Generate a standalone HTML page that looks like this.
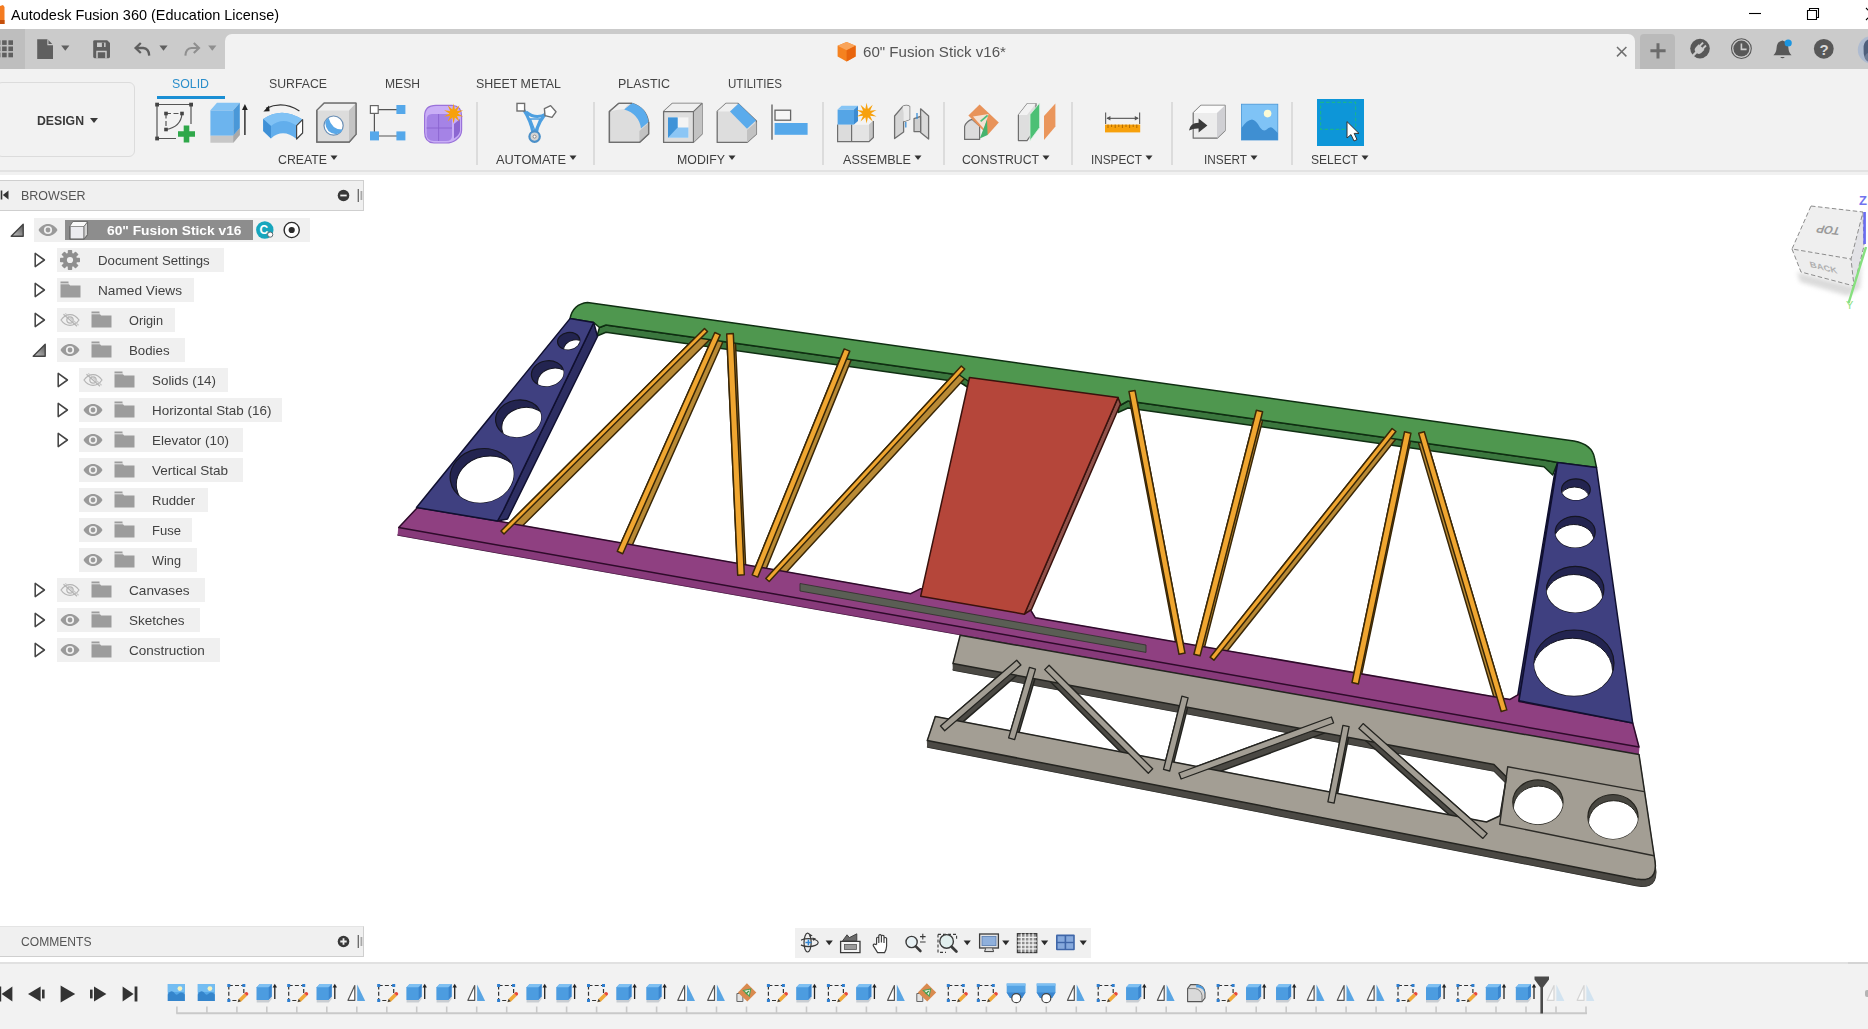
<!DOCTYPE html>
<html lang="en"><head><meta charset="utf-8"><title>Autodesk Fusion 360 (Education License)</title>
<style>
html,body{margin:0;padding:0;}
body{width:1868px;height:1029px;overflow:hidden;background:#fff;position:relative;
font-family:"Liberation Sans",sans-serif;}
.b{position:absolute;display:block;}
.t{position:absolute;white-space:nowrap;line-height:1;transform-origin:0 50%;}
</style></head>
<body>
<div class="b" style="left:0px;top:0px;width:1868px;height:29px;background:#ffffff;"></div>
<svg class="b" style="left:0;top:5px" width="6" height="20" viewBox="0 0 6 20"><path d="M0 1 L3 0 L4.5 2 L4.5 19 L0 19Z" fill="#f47b20"/><path d="M0 15 L4.5 15 L4.5 19 L0 19Z" fill="#c4500c"/></svg>
<span class="t" style="left:11.0px;top:6.8px;font-size:15px;color:#000;transform:scaleX(0.9652);">Autodesk Fusion 360 (Education License)</span>
<svg class="b" style="left:1740px;top:0" width="128" height="29" viewBox="1740 0 128 29" fill="none" stroke="#000" stroke-width="1.1"><path d="M1749 13.5H1761"/><path d="M1807.5 10.5H1816.5V19.5H1807.5Z"/><path d="M1809.5 10.5V8.5H1818.5V17.5H1816.5"/><path d="M1866 8L1878 20M1878 8L1866 20"/></svg>
<div class="b" style="left:0px;top:29px;width:1868px;height:40px;background:#cbcbcb;"></div>
<div class="b" style="left:0px;top:29px;width:25px;height:40px;background:#bebebe;"></div>
<div class="b" style="left:225px;top:34px;width:1410px;height:36px;background:#f2f2f2;border-radius:7px 7px 0 0;"></div>
<div class="b" style="left:1640px;top:34px;width:35px;height:35px;background:#bababa;border-radius:4px 4px 0 0;"></div>
<div class="b" style="left:0px;top:69px;width:1868px;height:101px;background:#f2f2f2;"></div>
<div class="b" style="left:0px;top:170px;width:1868px;height:2px;background:#e2e2e2;"></div>
<div class="b" style="left:0px;top:172px;width:1868px;height:3px;background:#f1f1f1;"></div>
<div class="b" style="left:-4px;top:82px;width:139px;height:75px;background:#f2f2f2;border:1px solid #dcdcdc;border-radius:6px;box-sizing:border-box;"></div>
<span class="t" style="left:37.0px;top:114.0px;font-size:13px;color:#3a3a3a;font-weight:700;transform:scaleX(0.9429);">DESIGN</span>
<svg class="b" style="left:89px;top:117px" width="10" height="7"><path d="M1 1H9L5 6Z" fill="#3a3a3a"/></svg>
<span class="t" style="left:172.0px;top:77.0px;font-size:13px;color:#2a8ecb;transform:scaleX(0.9484);">SOLID</span>
<div class="b" style="left:157px;top:95.5px;width:67.5px;height:3.5px;background:#1a8fd4;"></div>
<span class="t" style="left:269.0px;top:77.0px;font-size:13px;color:#444;transform:scaleX(0.9445);">SURFACE</span>
<span class="t" style="left:385.0px;top:77.0px;font-size:13px;color:#444;transform:scaleX(0.9318);">MESH</span>
<span class="t" style="left:476.0px;top:77.0px;font-size:13px;color:#444;transform:scaleX(0.9539);">SHEET METAL</span>
<span class="t" style="left:618.0px;top:77.0px;font-size:13px;color:#444;transform:scaleX(0.9596);">PLASTIC</span>
<span class="t" style="left:728.0px;top:77.0px;font-size:13px;color:#444;transform:scaleX(0.8899);">UTILITIES</span>
<span class="t" style="left:278.0px;top:153.0px;font-size:13px;color:#3f3f3f;transform:scaleX(0.9465);">CREATE</span>
<svg class="b" style="left:330px;top:155px" width="8" height="6"><path d="M0.5 0.5H7.5L4 5Z" fill="#333"/></svg>
<span class="t" style="left:496.0px;top:153.0px;font-size:13px;color:#3f3f3f;transform:scaleX(0.9855);">AUTOMATE</span>
<svg class="b" style="left:569px;top:155px" width="8" height="6"><path d="M0.5 0.5H7.5L4 5Z" fill="#333"/></svg>
<span class="t" style="left:677.0px;top:153.0px;font-size:13px;color:#3f3f3f;transform:scaleX(0.9495);">MODIFY</span>
<svg class="b" style="left:728px;top:155px" width="8" height="6"><path d="M0.5 0.5H7.5L4 5Z" fill="#333"/></svg>
<span class="t" style="left:843.0px;top:153.0px;font-size:13px;color:#3f3f3f;transform:scaleX(0.9702);">ASSEMBLE</span>
<svg class="b" style="left:914px;top:155px" width="8" height="6"><path d="M0.5 0.5H7.5L4 5Z" fill="#333"/></svg>
<span class="t" style="left:962.0px;top:153.0px;font-size:13px;color:#3f3f3f;transform:scaleX(0.9435);">CONSTRUCT</span>
<svg class="b" style="left:1042px;top:155px" width="8" height="6"><path d="M0.5 0.5H7.5L4 5Z" fill="#333"/></svg>
<span class="t" style="left:1091.0px;top:153.0px;font-size:13px;color:#3f3f3f;transform:scaleX(0.9051);">INSPECT</span>
<svg class="b" style="left:1145px;top:155px" width="8" height="6"><path d="M0.5 0.5H7.5L4 5Z" fill="#333"/></svg>
<span class="t" style="left:1204.0px;top:153.0px;font-size:13px;color:#3f3f3f;transform:scaleX(0.9064);">INSERT</span>
<svg class="b" style="left:1250px;top:155px" width="8" height="6"><path d="M0.5 0.5H7.5L4 5Z" fill="#333"/></svg>
<span class="t" style="left:1311.0px;top:153.0px;font-size:13px;color:#3f3f3f;transform:scaleX(0.9293);">SELECT</span>
<svg class="b" style="left:1361px;top:155px" width="8" height="6"><path d="M0.5 0.5H7.5L4 5Z" fill="#333"/></svg>
<div class="b" style="left:475.6px;top:102px;width:2px;height:63px;background:#dcdcdc;"></div>
<div class="b" style="left:592.7px;top:102px;width:2px;height:63px;background:#dcdcdc;"></div>
<div class="b" style="left:821.9px;top:102px;width:2px;height:63px;background:#dcdcdc;"></div>
<div class="b" style="left:942.8px;top:102px;width:2px;height:63px;background:#dcdcdc;"></div>
<div class="b" style="left:1071.2px;top:102px;width:2px;height:63px;background:#dcdcdc;"></div>
<div class="b" style="left:1170.6px;top:102px;width:2px;height:63px;background:#dcdcdc;"></div>
<div class="b" style="left:1291.4px;top:102px;width:2px;height:63px;background:#dcdcdc;"></div>
<div class="b" style="left:0px;top:180px;width:364px;height:31px;background:#f0f0f0;border:1px solid #cfcfcf;border-left:none;box-sizing:border-box;"></div>
<span class="t" style="left:20.5px;top:189.0px;font-size:13px;color:#555;transform:scaleX(0.9602);">BROWSER</span>
<svg class="b" style="left:0;top:188px" width="12" height="14"><path d="M1.5 2.5V11.5" stroke="#333" stroke-width="1.6"/><path d="M8.5 2.5V11.5L2.8 7Z" fill="#333"/></svg>
<svg class="b" style="left:336px;top:188px" width="28" height="16"><circle cx="7.5" cy="7.5" r="5.8" fill="#383838"/><path d="M4.3 7.5H10.7" stroke="#f0f0f0" stroke-width="1.8"/><path d="M22.3 1V14" stroke="#666" stroke-width="1.3"/><path d="M25.4 3V12" stroke="#a8a8a8" stroke-width="1.8"/></svg>
<div class="b" style="left:0px;top:926px;width:364px;height:31px;background:#f0f0f0;border:1px solid #cfcfcf;border-left:none;border-top-color:#e4e4e4;box-sizing:border-box;"></div>
<span class="t" style="left:20.5px;top:934.7px;font-size:13px;color:#555;transform:scaleX(0.9297);">COMMENTS</span>
<svg class="b" style="left:336px;top:934px" width="28" height="16"><circle cx="7.5" cy="7.5" r="5.8" fill="#383838"/><path d="M4.3 7.5H10.7M7.5 4.3V10.7" stroke="#f0f0f0" stroke-width="1.8"/><path d="M22.3 1V14" stroke="#666" stroke-width="1.3"/><path d="M25.4 3V12" stroke="#a8a8a8" stroke-width="1.8"/></svg>
<div class="b" style="left:795px;top:928px;width:296px;height:30px;background:#f0f0f0;"></div>
<div class="b" style="left:0px;top:962px;width:1868px;height:67px;background:#f2f2f2;border-top:2px solid #e1e1e1;box-sizing:border-box;"></div>
<div class="b" style="left:1848px;top:962px;width:20px;height:2px;background:#d4d4d4;"></div>
<div class="b" style="left:1865px;top:990px;width:3px;height:7px;background:#b4b4b4;border-radius:2px 0 0 2px;"></div>
<svg class="b" style="left:380px;top:290px" width="1300" height="610" viewBox="380 290 1300 610">
<polygon points="416.9,515.1 496.9,528.6 524.4,533.6 910.1,601.3 920.1,596.3 1029.4,616.6 1034.8,625.4 1509.4,707.0 1519.0,701.4 1518.4,709.1 1632.1,730.6 1638.4,754.6 398.1,535.1" fill="#873a7a" stroke="#2e0b2a" stroke-width="1.5" stroke-linejoin="round"/>
<g fill="#873a7a" stroke="#873a7a" stroke-width="0.5">
<polygon points="417.5,507.5 497.5,521.0 496.9,528.6 416.9,515.1"/>
<polygon points="497.5,521.0 525.0,526.0 524.4,533.6 496.9,528.6"/>
<polygon points="525.0,526.0 910.7,593.7 910.1,601.3 524.4,533.6"/>
<polygon points="910.7,593.7 920.7,588.7 920.1,596.3 910.1,601.3"/>
<polygon points="920.7,588.7 1030.0,609.0 1029.4,616.6 920.1,596.3"/>
<polygon points="1030.0,609.0 1035.4,617.8 1034.8,625.4 1029.4,616.6"/>
<polygon points="1035.4,617.8 1510.0,699.4 1509.4,707.0 1034.8,625.4"/>
<polygon points="1510.0,699.4 1519.6,693.8 1519.0,701.4 1509.4,707.0"/>
<polygon points="1519.6,693.8 1519.0,701.5 1518.4,709.1 1519.0,701.4"/>
<polygon points="1519.0,701.5 1632.7,723.0 1632.1,730.6 1518.4,709.1"/>
<polygon points="1632.7,723.0 1639.0,747.0 1638.4,754.6 1632.1,730.6"/>
<polygon points="1639.0,747.0 398.7,527.5 398.1,535.1 1638.4,754.6"/>
<polygon points="398.7,527.5 417.5,507.5 416.9,515.1 398.1,535.1"/>
</g>
<polygon points="599.5,327.5 606.0,325.0 959.5,375.0 969.0,381.0 969.0,388.0 959.5,382.0 606.0,332.2 597.0,336.0" fill="#3b773e" stroke="#0f2e12" stroke-width="1.5" stroke-linejoin="round"/>
<polygon points="1119.0,406.0 1128.0,401.0 1544.0,460.0 1557.7,462.5 1552.7,475.0 1544.0,466.8 1128.0,408.0 1118.0,412.5" fill="#3b773e" stroke="#0f2e12" stroke-width="1.5" stroke-linejoin="round"/>
<polygon points="593.7,322.5 597.5,336.5 507.5,519.0 497.5,521.0 503.5,510.0" fill="#2d2e62" stroke="#101030" stroke-width="1.5" stroke-linejoin="round"/>
<polygon points="1557.7,462.5 1554.2,476.0 1517.6,696.0 1519.0,701.5" fill="#2d2e62" stroke="#101030" stroke-width="1.5" stroke-linejoin="round"/>
<polygon points="501.0,531.0 704.5,328.5 707.5,331.5 710.0,339.3 506.5,541.8 503.5,538.8" fill="#b98a35" stroke="#3a2706" stroke-width="1.5" stroke-linejoin="round"/>
<polygon points="617.3,551.3 714.8,332.5 720.2,334.9 722.5,342.7 625.0,561.5 619.6,559.1" fill="#b98a35" stroke="#3a2706" stroke-width="1.5" stroke-linejoin="round"/>
<polygon points="726.7,333.9 733.3,333.5 735.4,341.3 746.4,582.6 739.7,583.0 737.7,575.2" fill="#b98a35" stroke="#3a2706" stroke-width="1.5" stroke-linejoin="round"/>
<polygon points="752.2,574.9 844.2,348.9 849.8,351.1 851.6,358.9 759.6,584.9 754.0,582.7" fill="#b98a35" stroke="#3a2706" stroke-width="1.5" stroke-linejoin="round"/>
<polygon points="765.8,578.5 961.3,366.0 964.7,369.0 966.2,376.8 770.7,589.3 767.4,586.3" fill="#b98a35" stroke="#3a2706" stroke-width="1.5" stroke-linejoin="round"/>
<polygon points="1129.0,391.6 1135.0,390.4 1185.0,653.1 1185.4,660.9 1179.4,662.1 1129.4,399.4" fill="#b98a35" stroke="#3a2706" stroke-width="1.5" stroke-linejoin="round"/>
<polygon points="1193.9,654.2 1256.4,410.2 1262.6,411.8 1262.8,419.6 1200.3,663.6 1194.0,662.0" fill="#b98a35" stroke="#3a2706" stroke-width="1.5" stroke-linejoin="round"/>
<polygon points="1210.0,665.0 1210.1,657.2 1392.1,428.5 1395.9,431.5 1395.7,439.3 1213.7,668.0" fill="#b98a35" stroke="#3a2706" stroke-width="1.5" stroke-linejoin="round"/>
<polygon points="1351.5,690.3 1352.0,682.5 1404.5,431.8 1410.9,433.2 1410.5,441.0 1358.0,691.7" fill="#b98a35" stroke="#3a2706" stroke-width="1.5" stroke-linejoin="round"/>
<polygon points="1418.0,441.1 1418.7,433.3 1424.3,431.7 1506.8,709.9 1506.0,717.7 1500.5,719.3" fill="#b98a35" stroke="#3a2706" stroke-width="1.5" stroke-linejoin="round"/>
<polygon points="417.5,507.5 497.5,521.0 525.0,526.0 910.7,593.7 920.7,588.7 1030.0,609.0 1035.4,617.8 1510.0,699.4 1519.6,693.8 1519.0,701.5 1632.7,723.0 1639.0,747.0 398.7,527.5" fill="#8f4081" stroke="#2e0b2a" stroke-width="1.5" stroke-linejoin="round"/>
<polygon points="800.0,583.5 1146.0,645.0 1146.0,652.4 800.0,591.0" fill="#5a5e54" stroke="#2c2e28" stroke-width="0.8" stroke-linejoin="round"/>
<path d="M570 318.6 Q573 304 587.5 302.5 L1574 441 Q1592 444.5 1594.4 457.5 L1596.5 467.5 L1557.7 462.5 L1544 460 L1128 401 L1119 406 L968 381 L959.5 375 L606 325 L599.5 327.5 L593.7 322.5 Z" fill="#4f974f" stroke="#0f2e12" stroke-width="1.5" stroke-linejoin="round"/>
<polygon points="570.0,318.6 593.7,322.5 503.5,510.0 497.5,521.0 416.5,507.5" fill="#3f4080" stroke="#101030" stroke-width="1.5" stroke-linejoin="round"/>
<clipPath id="hc1"><ellipse cx="568.7" cy="341" rx="11.2" ry="8.5" transform="rotate(-10 568.7 341)"/></clipPath>
<ellipse cx="568.7" cy="341" rx="11.2" ry="8.5" transform="rotate(-10 568.7 341)" fill="#232450" stroke="#151522" stroke-width="1.2"/>
<g clip-path="url(#hc1)"><ellipse cx="573.5" cy="349.4" rx="11.2" ry="8.5" transform="rotate(-10 568.7 341)" fill="#fff" stroke="#151522" stroke-width="1"/></g>
<clipPath id="hc2"><ellipse cx="547.5" cy="373.5" rx="16.2" ry="12.7" transform="rotate(-10 547.5 373.5)"/></clipPath>
<ellipse cx="547.5" cy="373.5" rx="16.2" ry="12.7" transform="rotate(-10 547.5 373.5)" fill="#232450" stroke="#151522" stroke-width="1.2"/>
<g clip-path="url(#hc2)"><ellipse cx="552.3" cy="381.9" rx="16.2" ry="12.7" transform="rotate(-10 547.5 373.5)" fill="#fff" stroke="#151522" stroke-width="1"/></g>
<clipPath id="hc3"><ellipse cx="518.4" cy="418.5" rx="22.9" ry="18.5" transform="rotate(-10 518.4 418.5)"/></clipPath>
<ellipse cx="518.4" cy="418.5" rx="22.9" ry="18.5" transform="rotate(-10 518.4 418.5)" fill="#232450" stroke="#151522" stroke-width="1.2"/>
<g clip-path="url(#hc3)"><ellipse cx="523.1999999999999" cy="426.9" rx="22.9" ry="18.5" transform="rotate(-10 518.4 418.5)" fill="#fff" stroke="#151522" stroke-width="1"/></g>
<clipPath id="hc4"><ellipse cx="481.9" cy="475.6" rx="31.9" ry="26.9" transform="rotate(-10 481.9 475.6)"/></clipPath>
<ellipse cx="481.9" cy="475.6" rx="31.9" ry="26.9" transform="rotate(-10 481.9 475.6)" fill="#232450" stroke="#151522" stroke-width="1.2"/>
<g clip-path="url(#hc4)"><ellipse cx="486.7" cy="484.0" rx="31.9" ry="26.9" transform="rotate(-10 481.9 475.6)" fill="#fff" stroke="#151522" stroke-width="1"/></g>
<polygon points="1557.7,462.5 1596.5,467.5 1632.7,723.0 1519.0,700.7" fill="#3f4080" stroke="#101030" stroke-width="1.5" stroke-linejoin="round"/>
<clipPath id="hc5"><ellipse cx="1575.9" cy="489.4" rx="14.4" ry="10.6"/></clipPath>
<ellipse cx="1575.9" cy="489.4" rx="14.4" ry="10.6" fill="#232450" stroke="#151522" stroke-width="1.2"/>
<g clip-path="url(#hc5)"><ellipse cx="1574.5" cy="497.59999999999997" rx="14.4" ry="10.6" fill="#fff" stroke="#151522" stroke-width="1"/></g>
<clipPath id="hc6"><ellipse cx="1575.2" cy="531.9" rx="20" ry="15.6"/></clipPath>
<ellipse cx="1575.2" cy="531.9" rx="20" ry="15.6" fill="#232450" stroke="#151522" stroke-width="1.2"/>
<g clip-path="url(#hc6)"><ellipse cx="1573.8" cy="540.1" rx="20" ry="15.6" fill="#fff" stroke="#151522" stroke-width="1"/></g>
<clipPath id="hc7"><ellipse cx="1575.2" cy="589.4" rx="28.7" ry="23.1"/></clipPath>
<ellipse cx="1575.2" cy="589.4" rx="28.7" ry="23.1" fill="#232450" stroke="#151522" stroke-width="1.2"/>
<g clip-path="url(#hc7)"><ellipse cx="1573.8" cy="597.6" rx="28.7" ry="23.1" fill="#fff" stroke="#151522" stroke-width="1"/></g>
<clipPath id="hc8"><ellipse cx="1574" cy="662.9" rx="40" ry="32.9"/></clipPath>
<ellipse cx="1574" cy="662.9" rx="40" ry="32.9" fill="#232450" stroke="#151522" stroke-width="1.2"/>
<g clip-path="url(#hc8)"><ellipse cx="1572.6" cy="671.1" rx="40" ry="32.9" fill="#fff" stroke="#151522" stroke-width="1"/></g>
<polygon points="1118.0,397.5 1120.5,404.0 1031.5,609.5 1024.4,614.2" fill="#91524b" stroke="#3a120d" stroke-width="1.5" stroke-linejoin="round"/>
<polygon points="969.5,377.5 1118.0,397.5 1024.4,614.2 920.7,596.2" fill="#b5463a" stroke="#3a120d" stroke-width="1.5" stroke-linejoin="round"/>
<polygon points="704.5,328.5 707.5,331.5 504.0,534.0 501.0,531.0" fill="#f0a630" stroke="#3a2706" stroke-width="1.5" stroke-linejoin="round"/>
<polygon points="714.8,332.5 720.2,334.9 622.7,553.7 617.3,551.3" fill="#f0a630" stroke="#3a2706" stroke-width="1.5" stroke-linejoin="round"/>
<polygon points="726.7,333.9 733.3,333.5 744.3,574.8 737.7,575.2" fill="#f0a630" stroke="#3a2706" stroke-width="1.5" stroke-linejoin="round"/>
<polygon points="844.2,348.9 849.8,351.1 757.8,577.1 752.2,574.9" fill="#f0a630" stroke="#3a2706" stroke-width="1.5" stroke-linejoin="round"/>
<polygon points="961.3,366.0 964.7,369.0 769.2,581.5 765.8,578.5" fill="#f0a630" stroke="#3a2706" stroke-width="1.5" stroke-linejoin="round"/>
<polygon points="1129.0,391.6 1135.0,390.4 1185.0,653.1 1179.0,654.3" fill="#f0a630" stroke="#3a2706" stroke-width="1.5" stroke-linejoin="round"/>
<polygon points="1256.4,410.2 1262.6,411.8 1200.1,655.8 1193.9,654.2" fill="#f0a630" stroke="#3a2706" stroke-width="1.5" stroke-linejoin="round"/>
<polygon points="1392.1,428.5 1395.9,431.5 1213.9,660.2 1210.1,657.2" fill="#f0a630" stroke="#3a2706" stroke-width="1.5" stroke-linejoin="round"/>
<polygon points="1404.5,431.8 1410.9,433.2 1358.4,683.9 1352.0,682.5" fill="#f0a630" stroke="#3a2706" stroke-width="1.5" stroke-linejoin="round"/>
<polygon points="1418.7,433.3 1424.3,431.7 1506.8,709.9 1501.2,711.5" fill="#f0a630" stroke="#3a2706" stroke-width="1.5" stroke-linejoin="round"/>
<polygon points="960.5,641.9 1639.3,761.1 1655.2,867.1 1655.7,872.4 1655.3,876.8 1654.2,880.4 1652.2,883.1 1649.4,885.0 1645.8,886.0 1641.3,886.2 1636.1,885.5 927.6,747.0 935.6,723.0 1486.8,828.6 1500.3,822.3 1506.8,783.6 1494.3,771.1 953.3,670.0" fill="#4b4944" stroke="#242420" stroke-width="1.5" stroke-linejoin="round"/>
<g fill="#4b4944" stroke="#4b4944" stroke-width="0.5">
<polygon points="960.2,635.3 1639.0,754.5 1639.3,761.1 960.5,641.9"/>
<polygon points="1639.0,754.5 1654.9,860.5 1655.2,867.1 1639.3,761.1"/>
<polygon points="1654.9,860.5 1655.4,865.8 1655.7,872.4 1655.2,867.1"/>
<polygon points="1655.4,865.8 1655.0,870.2 1655.3,876.8 1655.7,872.4"/>
<polygon points="1655.0,870.2 1653.9,873.8 1654.2,880.4 1655.3,876.8"/>
<polygon points="1653.9,873.8 1651.9,876.5 1652.2,883.1 1654.2,880.4"/>
<polygon points="1651.9,876.5 1649.1,878.4 1649.4,885.0 1652.2,883.1"/>
<polygon points="1649.1,878.4 1645.5,879.4 1645.8,886.0 1649.4,885.0"/>
<polygon points="1645.5,879.4 1641.0,879.6 1641.3,886.2 1645.8,886.0"/>
<polygon points="1641.0,879.6 1635.8,878.9 1636.1,885.5 1641.3,886.2"/>
<polygon points="1635.8,878.9 927.3,740.4 927.6,747.0 1636.1,885.5"/>
<polygon points="927.3,740.4 935.3,716.4 935.6,723.0 927.6,747.0"/>
<polygon points="935.3,716.4 1486.5,822.0 1486.8,828.6 935.6,723.0"/>
<polygon points="1486.5,822.0 1500.0,815.7 1500.3,822.3 1486.8,828.6"/>
<polygon points="1500.0,815.7 1506.5,777.0 1506.8,783.6 1500.3,822.3"/>
<polygon points="1506.5,777.0 1494.0,764.5 1494.3,771.1 1506.8,783.6"/>
<polygon points="1494.0,764.5 953.0,663.4 953.3,670.0 1494.3,771.1"/>
<polygon points="953.0,663.4 960.2,635.3 960.5,641.9 953.3,670.0"/>
</g>
<polygon points="940.5,726.0 1016.7,660.2 1020.9,665.0 1021.2,671.6 945.0,737.4 940.8,732.6" fill="#4b4944" stroke="#242420" stroke-width="1.5" stroke-linejoin="round"/>
<polygon points="1008.6,737.9 1029.5,667.3 1035.5,669.1 1035.8,675.7 1014.9,746.3 1008.9,744.5" fill="#4b4944" stroke="#242420" stroke-width="1.5" stroke-linejoin="round"/>
<polygon points="1044.7,669.6 1049.1,665.2 1152.7,768.8 1153.0,775.4 1148.6,779.8 1045.0,676.2" fill="#4b4944" stroke="#242420" stroke-width="1.5" stroke-linejoin="round"/>
<polygon points="1163.5,769.4 1181.9,696.2 1188.1,697.8 1188.4,704.4 1170.0,777.6 1163.8,776.0" fill="#4b4944" stroke="#242420" stroke-width="1.5" stroke-linejoin="round"/>
<polygon points="1178.9,773.0 1331.4,717.0 1333.6,723.0 1333.9,729.6 1181.4,785.6 1179.2,779.6" fill="#4b4944" stroke="#242420" stroke-width="1.5" stroke-linejoin="round"/>
<polygon points="1327.9,801.9 1342.9,725.4 1349.1,726.6 1349.4,733.2 1334.4,809.7 1328.2,808.5" fill="#4b4944" stroke="#242420" stroke-width="1.5" stroke-linejoin="round"/>
<polygon points="1358.9,728.4 1363.1,723.6 1487.1,833.6 1487.4,840.2 1483.2,845.0 1359.2,735.0" fill="#4b4944" stroke="#242420" stroke-width="1.5" stroke-linejoin="round"/>
<polygon points="960.2,635.3 1639.0,754.5 1654.9,860.5 1655.4,865.8 1655.0,870.2 1653.9,873.8 1651.9,876.5 1649.1,878.4 1645.5,879.4 1641.0,879.6 1635.8,878.9 927.3,740.4 935.3,716.4 1486.5,822.0 1500.0,815.7 1506.5,777.0 1494.0,764.5 953.0,663.4" fill="#a39e94" stroke="#242420" stroke-width="1.5" stroke-linejoin="round"/>
<polygon points="1016.7,660.2 940.5,726.0 944.7,730.8 1020.9,665.0" fill="#a39e94" stroke="#242420" stroke-width="1.3" stroke-linejoin="round"/>
<polygon points="1029.5,667.3 1008.6,737.9 1014.6,739.7 1035.5,669.1" fill="#a39e94" stroke="#242420" stroke-width="1.3" stroke-linejoin="round"/>
<polygon points="1044.7,669.6 1148.3,773.2 1152.7,768.8 1049.1,665.2" fill="#a39e94" stroke="#242420" stroke-width="1.3" stroke-linejoin="round"/>
<polygon points="1181.9,696.2 1163.5,769.4 1169.7,771.0 1188.1,697.8" fill="#a39e94" stroke="#242420" stroke-width="1.3" stroke-linejoin="round"/>
<polygon points="1331.4,717.0 1178.9,773.0 1181.1,779.0 1333.6,723.0" fill="#a39e94" stroke="#242420" stroke-width="1.3" stroke-linejoin="round"/>
<polygon points="1342.9,725.4 1327.9,801.9 1334.1,803.1 1349.1,726.6" fill="#a39e94" stroke="#242420" stroke-width="1.3" stroke-linejoin="round"/>
<polygon points="1358.9,728.4 1482.9,838.4 1487.1,833.6 1363.1,723.6" fill="#a39e94" stroke="#242420" stroke-width="1.3" stroke-linejoin="round"/>
<polyline points="1644.2,791.6 1507.7,766.8 1499.7,824.3 1654,855.7" fill="none" stroke="#2c2b27" stroke-width="1.4" stroke-linejoin="round"/>
<clipPath id="hc9"><ellipse cx="1537.9" cy="802.1" rx="25.1" ry="22.2"/></clipPath>
<ellipse cx="1537.9" cy="802.1" rx="25.1" ry="22.2" fill="#484741" stroke="#26251f" stroke-width="1.2"/>
<g clip-path="url(#hc9)"><ellipse cx="1538.5" cy="808.3000000000001" rx="25.1" ry="22.2" fill="#fff" stroke="#26251f" stroke-width="1"/></g>
<clipPath id="hc10"><ellipse cx="1613" cy="816.7" rx="25.1" ry="22.2"/></clipPath>
<ellipse cx="1613" cy="816.7" rx="25.1" ry="22.2" fill="#484741" stroke="#26251f" stroke-width="1.2"/>
<g clip-path="url(#hc10)"><ellipse cx="1613.6" cy="822.9000000000001" rx="25.1" ry="22.2" fill="#fff" stroke="#26251f" stroke-width="1"/></g>
</svg>
<svg class="b" style="left:0;top:29px" width="226" height="40" viewBox="0 29 226 40">
<rect x="-4.2" y="40.3" width="4.6" height="4.6" fill="#5f5f5f"/>
<rect x="2.1" y="40.3" width="4.6" height="4.6" fill="#5f5f5f"/>
<rect x="8.4" y="40.3" width="4.6" height="4.6" fill="#5f5f5f"/>
<rect x="-4.2" y="46.5" width="4.6" height="4.6" fill="#5f5f5f"/>
<rect x="2.1" y="46.5" width="4.6" height="4.6" fill="#5f5f5f"/>
<rect x="8.4" y="46.5" width="4.6" height="4.6" fill="#5f5f5f"/>
<rect x="-4.2" y="52.7" width="4.6" height="4.6" fill="#5f5f5f"/>
<rect x="2.1" y="52.7" width="4.6" height="4.6" fill="#5f5f5f"/>
<rect x="8.4" y="52.7" width="4.6" height="4.6" fill="#5f5f5f"/>
<path d="M37.2 39.2H47.6L53 44.8V59H37.2Z" fill="#5f5f5f"/><path d="M47.9 39.2V44.6H53.2" fill="none" stroke="#cbcbcb" stroke-width="1.1"/>
<path d="M61.2 45.4H69.4L65.3 50.8Z" fill="#5f5f5f"/>
<path d="M93.2 41.6Q93.2 40.2 94.6 40.2H107.2L110 43V56.8Q110 58.2 108.6 58.2H94.6Q93.2 58.2 93.2 56.8Z" fill="#5f5f5f"/><rect x="97" y="42.6" width="8.6" height="4.4" fill="#cbcbcb"/><rect x="101.9" y="42.6" width="2.2" height="4.4" fill="#5f5f5f"/><path d="M97 58.2V51.4H106V58.2" fill="none" stroke="#cbcbcb" stroke-width="1.5"/>
<path d="M140.8 43L135.6 48L140.8 53" fill="none" stroke="#5f5f5f" stroke-width="2.3" stroke-linejoin="miter"/><path d="M136.2 48H143.2Q148.8 48.4 149.2 55.6" fill="none" stroke="#5f5f5f" stroke-width="2.3"/>
<path d="M159.4 45.4H167.6L163.5 50.8Z" fill="#5f5f5f"/>
<path d="M193.8 43L199 48L193.8 53" fill="none" stroke="#8f8f8f" stroke-width="2.1"/><path d="M198.4 48H191.4Q185.8 48.4 185.4 55.6" fill="none" stroke="#8f8f8f" stroke-width="2.1"/>
<path d="M208.2 45.4H216.4L212.3 50.8Z" fill="#8f8f8f"/>
</svg>
<svg class="b" style="left:834px;top:40px" width="26" height="24" viewBox="0 0 26 24"><path d="M12.6 2L21.6 5.8V16.6L12.6 21.6L3.6 16.6V5.8Z" fill="#f58220"/><path d="M12.6 2L21.6 5.8L12.6 10.2L3.6 5.8Z" fill="#f9a45a"/><path d="M12.6 10.2L21.6 5.8V16.6L12.6 21.6Z" fill="#e8650e"/></svg>
<span class="t" style="left:863.0px;top:45.0px;font-size:14.5px;color:#555;transform:scaleX(1.0413);">60" Fusion Stick v16*</span>
<svg class="b" style="left:1614px;top:44px" width="16" height="16"><path d="M3 3L12.4 12.4M12.4 3L3 12.4" stroke="#707070" stroke-width="1.5" fill="none"/></svg>
<svg class="b" style="left:1640px;top:29px" width="228" height="40" viewBox="1640 29 228 40">
<path d="M1658 43.2V58.4M1650.4 50.8H1665.6" stroke="#6c6c6c" stroke-width="3" fill="none"/>
<circle cx="1700" cy="48.6" r="9.8" fill="#585858"/><g transform="rotate(45 1700 48.6)" fill="#cbcbcb"><path d="M1696 46.4H1704V50.2Q1704 54.2 1700 54.2Q1696 54.2 1696 50.2Z"/><rect x="1697" y="42.2" width="1.9" height="4.6"/><rect x="1701.1" y="42.2" width="1.9" height="4.6"/><rect x="1698.9" y="53.6" width="2.2" height="7.4"/></g>
<circle cx="1741.4" cy="48.6" r="9.9" fill="none" stroke="#585858" stroke-width="1.1"/><circle cx="1741.4" cy="48.6" r="8" fill="#585858"/><path d="M1741.4 43.6V49.4H1746.6" fill="none" stroke="#cbcbcb" stroke-width="1.6"/>
<path d="M1773.4 55.2Q1776.4 52.8 1776.6 47.8Q1777 41.6 1782.4 40.4Q1788 41.6 1788.4 47.8Q1788.6 52.8 1791.6 55.2Z" fill="#585858"/><path d="M1780.2 57H1784.8Q1782.5 59.6 1780.2 57Z" fill="#585858"/><circle cx="1788.2" cy="43" r="3.6" fill="#1b95e0"/>
<circle cx="1823.8" cy="48.8" r="9.9" fill="#585858"/>
</svg>
<span class="t" style="left:1819.6px;top:41.5px;font-size:15px;color:#d8d8d8;font-weight:700;">?</span>
<svg class="b" style="left:1850px;top:36px" width="18" height="28" viewBox="0 0 18 28"><circle cx="21.6" cy="13.8" r="13.8" fill="#aebbd0"/><path d="M18 3.4Q13 6 13.6 13Q13.2 19 15 22.6Q16.4 24.6 18 25.4Z" fill="#4f5f7c"/><path d="M18 17Q14.6 18 15 22.6Q16.4 24.6 18 25.4Z" fill="#6d7c97"/></svg>
<svg class="b" style="left:150px;top:98px" width="1230" height="50" viewBox="150 98 1230 50">
<path d="M157 104.5H191V124M157 104.5V138.5H176" fill="none" stroke="#555" stroke-width="1.2"/><g fill="#444"><rect x="155.2" y="102.7" width="3.8" height="3.8"/><rect x="189.2" y="102.7" width="3.8" height="3.8"/><rect x="155.2" y="136.6" width="3.8" height="3.8"/></g><path d="M166 113.5H182M166 113.5V129.5" fill="none" stroke="#555" stroke-width="1.2" stroke-dasharray="5 2.5"/><path d="M182 113.5Q181 127 166 129.5" fill="none" stroke="#555" stroke-width="1.2"/><g fill="#444"><rect x="164.2" y="111.7" width="3.6" height="3.6"/><rect x="180.2" y="111.7" width="3.6" height="3.6"/><rect x="164.2" y="127.7" width="3.6" height="3.6"/></g><path d="M186.5 125.4V142.6M178 134H195" stroke="#2fa84a" stroke-width="5.6" fill="none"/>
<path d="M210.4 135.6H233.3L239.8 128V135L233.3 142.7H210.4Z" fill="#c7c7c7"/><path d="M233.3 135.6L239.8 128V135L233.3 142.7Z" fill="#a9a9a9"/><path d="M210.4 110.3H233.3V135.6H210.4Z" fill="#6cb4ee"/><path d="M210.4 110.3L217 102.7H239.8L233.3 110.3Z" fill="#84c3f4"/><path d="M233.3 110.3L239.8 102.7V128L233.3 135.6Z" fill="#4a98d8"/><path d="M244.9 135V108" stroke="#222" stroke-width="1.4"/><path d="M242 110L244.9 104L247.8 110Z" fill="#222"/>
<path d="M266 108.4Q283 100.4 299.4 111" fill="none" stroke="#333" stroke-width="1.2"/><path d="M263.4 111.4L269 105.6L269.6 111.2Z" fill="#222"/><path d="M263.2 119Q282 106 302.6 119.6V133L296.6 139Q283 128 271 138.4L263.2 131Z" fill="#62aeec"/><path d="M263.2 119Q282 106 302.6 119.6L296.6 125.6Q283 116 271 126Z" fill="#80c2f5"/><path d="M263.2 119L271 126V138.4L263.2 131Z" fill="#3f90d6"/><path d="M296.6 125.6L302.6 119.6V133L296.6 139Z" fill="#fff" stroke="#444" stroke-width="1.2" stroke-linejoin="round"/>
<path d="M316.8 110.4L324 103.2H356V134.4L349 142.2H316.8Z" fill="#dcdcdc" stroke="#6f6f6f" stroke-width="1.3" stroke-linejoin="round"/><path d="M316.8 110.4L324 103.2H356L349 110.4Z" fill="#efefef"/><path d="M349 110.4L356 103.2V134.4L349 142.2Z" fill="#c4c4c4"/><path d="M316.8 110.4L324 103.2H356V134.4L349 142.2H316.8Z" fill="none" stroke="#6f6f6f" stroke-width="1.3" stroke-linejoin="round"/><circle cx="333.6" cy="125.6" r="9.6" fill="#fff" stroke="#6a8fb5" stroke-width="1.2"/><path d="M325.2 122.6Q326 133.4 336 134.2Q341 133.6 342.6 129.6Q332 130 328.6 118Q325.8 119.6 325.2 122.6Z" fill="#5aa8e8"/>
<path d="M374.4 109.6H400.8M374.4 109.6V136M374.4 136H400.8" stroke="#555" stroke-width="1.2" fill="none"/><rect x="370.4" y="105.6" width="7.8" height="7.8" fill="#fff" stroke="#666" stroke-width="1.2"/><g fill="#55a8ea"><rect x="396.4" y="105" width="9" height="9"/><rect x="370" y="131.4" width="9" height="9"/><rect x="396.4" y="131.4" width="9" height="9"/></g>
<path d="M424.6 116Q424.6 105.4 436 105.4H452Q461.6 106 461.6 116V130Q461.6 136 456 140Q452 143 446 143H434Q424.6 142.6 424.6 132Z" fill="#c9aef6" stroke="#9a72da" stroke-width="1.2"/><path d="M426.6 120Q426.6 114 432 114H447Q452 114 452 120V136Q452 141 446 141H434Q426.6 141 426.6 134Z" fill="#a583e6"/><path d="M454 124L460 119V131Q459.4 135 454 138.6Z" fill="#8c66d2"/><path d="M438.6 114V141M426.6 128H452" stroke="#8a63cf" stroke-width="0.9" fill="none"/>
<polygon points="453.6,103.4 454.9,109.4 459.5,105.3 457.0,110.9 463.1,110.3 457.8,113.4 463.1,116.5 457.0,115.9 459.5,121.5 454.9,117.4 453.6,123.4 452.3,117.4 447.7,121.5 450.2,115.9 444.1,116.5 449.4,113.4 444.1,110.3 450.2,110.9 447.7,105.3 452.3,109.4" fill="#f7a10c"/>
<path d="M523 108.6Q531 121 533 133M548 111.6Q538 121 536.4 133M526 112Q536 120 546 114" fill="none" stroke="#4d9fe0" stroke-width="3"/><path d="M530.4 119H540L535 131Z" fill="#f2f2f2" stroke="#4d9fe0" stroke-width="1.4"/><rect x="517" y="103.4" width="7.6" height="7.6" fill="#fff" stroke="#6f6f6f" stroke-width="1.4"/><path d="M550.6 105.6L556 111.8L552 117.4L545 115.6L544.4 108.6Z" fill="#fff" stroke="#6f6f6f" stroke-width="1.4" stroke-linejoin="round"/><circle cx="534.6" cy="136.6" r="5.2" fill="#d4d4d4" stroke="#4a8fc8" stroke-width="2.2"/><circle cx="534.6" cy="136.6" r="1.5" fill="#fff" stroke="#777" stroke-width="0.8"/>
<path d="M609.4 111.6L618.6 103.4H632Q646.4 108 648.6 122V134L639.4 142.4H609.4Z" fill="#dddddd" stroke="#6f6f6f" stroke-width="1.3" stroke-linejoin="round"/><path d="M609.4 111.6L618.6 103.4H630Q626 105.6 624.4 109Q616 109.6 609.4 111.6Z" fill="#f0f0f0"/><path d="M639.4 131L648.6 123V134L639.4 142.4Z" fill="#c2c2c2"/><path d="M624.2 109.6L632 103Q646.4 107 648.6 122L641 128.6Q639 114 624.2 109.6Z" fill="#5aabec"/><path d="M632 103.4H618.6L609.4 111.6V142.4H639.4L648.6 134V122" fill="none" stroke="#6f6f6f" stroke-width="1.3" stroke-linejoin="round"/>
<path d="M663.6 111.6L672.4 103.4H702V134L693.4 142.4H663.6Z" fill="#dedede" stroke="#6f6f6f" stroke-width="1.3" stroke-linejoin="round"/><path d="M663.6 111.6L672.4 103.4H702L693.4 111.6Z" fill="#f0f0f0"/><path d="M693.4 111.6L702 103.4V134L693.4 142.4Z" fill="#c3c3c3"/><rect x="668" y="117.4" width="20.4" height="20.4" fill="#f4f4f4"/><path d="M668 117.4H677.6V127.6H688.4V137.8H668Z" fill="#8cc6f5"/><path d="M668 117.4H677.6V127.6L668 137.8Z" fill="#3f93d8"/><path d="M663.6 111.6H693.4V142.4M693.4 111.6L702 103.4" fill="none" stroke="#6f6f6f" stroke-width="1.1"/>
<path d="M717.2 111.6L726 103.4H738L756.4 121V134L747 142.4H717.2Z" fill="#dddddd" stroke="#6f6f6f" stroke-width="1.3" stroke-linejoin="round"/><path d="M717.2 111.6L726 103.4H738L730 111.6Z" fill="#f0f0f0"/><path d="M747 130L756.4 122V134L747 142.4Z" fill="#c2c2c2"/><path d="M730 111.6L738.6 103.6L756 120.6L747 128.8Z" fill="#5aabec"/>
<path d="M772 104.4V139.8" stroke="#666" stroke-width="1.4"/><rect x="775" y="110.2" width="15.6" height="10" fill="#f6f6f6" stroke="#666" stroke-width="1.3"/><rect x="774.6" y="123" width="33" height="11.8" fill="#55a8ea"/>
<path d="M837.6 124.6H851.6V141.6H837.6Z" fill="#dcdcdc"/><path d="M851.6 124.6H869V141.6H851.6Z" fill="#e4e4e4"/><path d="M851.6 124.6L856 120.6H873.4L869 124.6Z" fill="#f3f3f3"/><path d="M869 124.6L873.4 120.6V137.4L869 141.6Z" fill="#c6c6c6"/><path d="M837.6 124.6V141.6H869L873.4 137.4V121M851.6 124.6V141.6" fill="none" stroke="#6f6f6f" stroke-width="1.2"/><path d="M837.6 109.6L841.6 105.8H858L854 109.6Z" fill="#86c5f5"/><path d="M837.6 109.6H854V124.6H837.6Z" fill="#55a5e6"/><path d="M854 109.6L858 105.8V121L854 124.6Z" fill="#3b8bd2"/>
<polygon points="866.6,102.8 867.9,109.1 872.7,104.8 870.1,110.7 876.5,110.0 870.9,113.2 876.5,116.4 870.1,115.7 872.7,121.6 867.9,117.3 866.6,123.6 865.3,117.3 860.5,121.6 863.1,115.7 856.7,116.4 862.3,113.2 856.7,110.0 863.1,110.7 860.5,104.8 865.3,109.1" fill="#f7a10c"/>
<path d="M894.6 116L902.6 106.6Q906.6 104.4 909.6 106.6V119.4L903.6 121.6V132L894.6 138.6Z" fill="#d6d6d6" stroke="#6f6f6f" stroke-width="1.3" stroke-linejoin="round"/><path d="M902.6 106.6Q906.6 104.4 909.6 106.6V119.4L903.6 121.6V113Z" fill="#ebebeb"/><path d="M920.6 108.8L928.6 116V139L920.6 132.6Z" fill="#dadada" stroke="#6f6f6f" stroke-width="1.3" stroke-linejoin="round"/><path d="M914 118.6L920.6 116.4V131.6H914Z" fill="#cfcfcf" stroke="#6f6f6f" stroke-width="1.2" stroke-linejoin="round"/><path d="M905.8 122V127.4M917 113V119" stroke="#3b8fd8" stroke-width="1.3"/>
<path d="M964.6 139.4V126.4Q966.6 121 972 119.4L979.6 126V139.4Z" fill="#dcdcdc" stroke="#6f6f6f" stroke-width="1.2" stroke-linejoin="round"/><path d="M979.6 104.6L998.8 122.6L987.6 135L968.4 115.4Z" fill="#e8935a"/><path d="M973 116.6L988.6 114L984 129Z" fill="#f4e2d4"/><path d="M979.8 138.4L987 119.6L987.6 135Z" fill="#44b36e"/><path d="M980.6 121.4L987.6 115.4" stroke="#4dbf7a" stroke-width="1.8"/>
<path d="M1018.4 115L1027.4 103.6H1036V128L1027 140.6H1018.4Z" fill="#dedede" stroke="#6f6f6f" stroke-width="1.2" stroke-linejoin="round"/><path d="M1018.4 115L1027.4 103.6H1036L1027 115Z" fill="#f2f2f2"/><path d="M1030 114.6L1039.6 103V127.6L1030 140.6Z" fill="#4cc075" stroke="#d8f0df" stroke-width="0.8"/><path d="M1044 116L1055.4 103.6V126.6L1044 140Z" fill="#ea965c"/>
<path d="M1105.6 112.6V124M1139.6 112.6V124M1107 118.3H1138" stroke="#666" stroke-width="1.2" fill="none"/><path d="M1106.4 118.3L1110.4 116V120.6ZM1138.8 118.3L1134.8 116V120.6Z" fill="#555"/><rect x="1105" y="124.6" width="35.2" height="7.8" fill="#f7a10c"/><path d="M1108 124.6V128M1111.6 124.6V127M1115.2 124.6V128M1118.8 124.6V127M1122.4 124.6V128M1126 124.6V127M1129.6 124.6V128M1133.2 124.6V127M1136.8 124.6V128" stroke="#b06a00" stroke-width="1" fill="none"/>
<path d="M1193.2 113L1201 105.4H1225V130.6L1217 138.2H1193.2Z" fill="#ececec" stroke="#6f6f6f" stroke-width="1.2" stroke-linejoin="round"/><path d="M1193.2 113L1201 105.4H1225L1217 113Z" fill="#fbfbfb"/><path d="M1217 113L1225 105.4V130.6L1217 138.2Z" fill="#d0d0d4"/><path d="M1189 130.6Q1190 123 1198.6 122.8V118.6L1207.4 125.6L1198.6 132.6V128.6Q1193 128.4 1189 130.6Z" fill="#3a3a3a"/>
<rect x="1241.4" y="104.2" width="36.4" height="35.8" fill="#7fc3f6"/><rect x="1241.4" y="104.2" width="36.4" height="35.8" fill="none" stroke="#4795d6" stroke-width="0.8"/><path d="M1241.4 128Q1247 120 1252 119.6Q1256 120 1260 127.6Q1263 131.6 1266 130Q1270 126 1272.6 128Q1275 130 1277.8 133V140H1241.4Z" fill="#3f8fd2"/><circle cx="1267.6" cy="113.6" r="3.8" fill="#fbfbd6"/>
<rect x="1317" y="99" width="47" height="47" fill="#0d96d8"/><rect x="1320.6" y="102.4" width="35" height="27" fill="none" stroke="#19b48f" stroke-width="1.1" stroke-dasharray="3.4 2.2"/><path d="M1347 121.6V138L1351 134.6L1354 141L1357 139.6L1354.2 133.4H1359Z" fill="#fff" stroke="#333" stroke-width="1" stroke-linejoin="round"/>
</svg>
<svg class="b" style="left:795px;top:928px" width="296" height="30" viewBox="795 928 296 30">
<ellipse cx="808.6" cy="942.6" rx="9.6" ry="4" fill="none" stroke="#3b3b3b" stroke-width="1.2"/><ellipse cx="807.6" cy="942.6" rx="3.6" ry="9.4" fill="none" stroke="#3b3b3b" stroke-width="1.2"/><path d="M805.4 942.4H811.4M808.4 939.4V945.4" stroke="#2f86d6" stroke-width="1.5"/><path d="M812.4 937.4L816 938.6L813.4 941Z" fill="#3b3b3b"/><path d="M809.6 933.8L812.6 935.6L809.6 937Z" fill="#3b3b3b"/><path d="M796.6 939.4H801V945.6H796.6Z" fill="#f0f0f0"/>
<path d="M825.6 940.4H832.8L829.2 945.2Z" fill="#2a2a2a"/>
<path d="M840.6 941.4H860V952.6H840.6Z" fill="#f4f4f4" stroke="#3b3b3b" stroke-width="1.3"/><rect x="844.4" y="944.4" width="12" height="5" fill="#9a9a9a" stroke="#555" stroke-width="0.8"/><path d="M842.6 940.8L847 934.8L849.4 937.6L856.8 933.8V940.8Z" fill="#6a6a6a" stroke="#3b3b3b" stroke-width="0.9" stroke-linejoin="round"/>
<path d="M876.6 944.6V938Q877.6 936.4 878.8 938V943M878.8 938V935.4Q880 933.8 881.4 935.4V942.4M881.4 936Q882.6 934.4 884 936V943M884 938Q885.4 936.8 886.6 938.4V946Q886.4 950 884.6 952.6H877.6Q875.4 949 873.2 945.6Q873 943.2 876.6 944.6" fill="#fff" stroke="#3b3b3b" stroke-width="1.15" stroke-linejoin="round"/>
<circle cx="911.6" cy="942" r="5.6" fill="#e8f1f4" stroke="#3b3b3b" stroke-width="1.4"/><path d="M915.8 946.4L920.4 951" stroke="#3b3b3b" stroke-width="2.6" stroke-linecap="round"/><path d="M920 936.6H925.6M922.8 933.8V939.4M920 942H925.6" stroke="#3b3b3b" stroke-width="1.1"/>
<path d="M938 934.4H956.6V940M938 934.4V952.4H946" fill="none" stroke="#3b3b3b" stroke-width="1.1" stroke-dasharray="3 2"/><circle cx="946.6" cy="941.4" r="6.8" fill="#e2efee" stroke="#3b3b3b" stroke-width="1.4"/><path d="M951.6 946.8L956.4 951.6" stroke="#3b3b3b" stroke-width="2.8" stroke-linecap="round"/>
<path d="M963.6 940.4H970.8L967.2 945.2Z" fill="#2a2a2a"/>
<rect x="979.6" y="934" width="18.8" height="14" fill="#e6e6e6" stroke="#3b3b3b" stroke-width="1.3"/><rect x="982" y="936.4" width="14" height="9.2" fill="#8fb0dc" stroke="#5a7db0" stroke-width="0.8"/><path d="M985.6 948.4L984.6 951.6H993.6L992.6 948.4" fill="#ddd" stroke="#3b3b3b" stroke-width="1"/>
<path d="M1002.2 940.4H1009.4L1005.8000000000001 945.2Z" fill="#2a2a2a"/>
<rect x="1017.4" y="933.6" width="19.4" height="19" fill="#8e8e8e" stroke="#3b3b3b" stroke-width="1.2"/><path d="M1021.3 933.6V952.6M1025.2 933.6V952.6M1029.1 933.6V952.6M1033 933.6V952.6M1017.4 937.4H1036.8M1017.4 941.2H1036.8M1017.4 945H1036.8M1017.4 948.8H1036.8" stroke="#f2f2f2" stroke-width="1.3" fill="none"/>
<path d="M1041.0 940.4H1048.2L1044.6000000000001 945.2Z" fill="#2a2a2a"/>
<rect x="1056" y="934.6" width="18.8" height="15.6" rx="1" fill="#3f66a8"/><g fill="#86a9dc"><rect x="1057.6" y="936.2" width="7" height="5.6"/><rect x="1066.2" y="936.2" width="7" height="5.6"/><rect x="1057.6" y="943.2" width="7" height="5.6"/><rect x="1066.2" y="943.2" width="7" height="5.6"/></g>
<path d="M1079.6 940.4H1086.8L1083.2 945.2Z" fill="#2a2a2a"/>
</svg>
<svg class="b" style="left:1770px;top:185px" width="98" height="130" viewBox="1770 185 98 130">
<defs><filter id="vb" x="-20%" y="-20%" width="140%" height="140%"><feGaussianBlur stdDeviation="2.2"/></filter></defs>
<path d="M1797 272L1852 286L1862 262L1860 288L1848 296L1800 282Z" fill="#bdbdbd" opacity="0.55" filter="url(#vb)"/>
<path d="M1811 206L1863 212L1851 259L1792 249Z" fill="#efefef"/><path d="M1792 249L1851 259L1854 286L1801 272Z" fill="#ededed"/><path d="M1851 259L1863 212L1864 246L1854 286Z" fill="#e2e2e6"/><path d="M1811 206L1863 212L1851 259L1792 249ZM1792 249L1801 272L1854 286L1851 259M1854 286L1864 246L1863 212" fill="none" stroke="#8c8c8c" stroke-width="1" stroke-dasharray="4.5 2.5"/>
<path d="M1864.6 212V244" stroke="#6a6cf0" stroke-width="2.6"/><path d="M1866 247L1848.6 303" stroke="#86e07e" stroke-width="2.4"/>
<text x="0" y="0" transform="translate(1841,227.6) rotate(187) skewX(-14)" font-family="Liberation Sans, sans-serif" font-weight="700" font-size="11.5" fill="#9a9a9a" textLength="23" lengthAdjust="spacingAndGlyphs">TOP</text>
<text x="0" y="0" transform="translate(1810.6,267) rotate(14) skewX(28)" font-family="Liberation Sans, sans-serif" font-weight="700" font-size="7.6" fill="#b0b0b0" textLength="28" lengthAdjust="spacingAndGlyphs">BACK</text>
<text x="1859" y="205" font-family="Liberation Sans, sans-serif" font-size="13" fill="#7173ee" font-weight="700">Z</text>
<text x="1846" y="309" font-family="Liberation Sans, sans-serif" font-size="11" fill="#8ce283">Y</text>
</svg>
<svg class="b" style="left:9.5px;top:223px" width="15" height="15" viewBox="0 0 15 15"><defs><linearGradient id="eg1" x1="0" y1="1" x2="1" y2="0"><stop offset="0" stop-color="#c8c8c8"/><stop offset="1" stop-color="#555"/></linearGradient></defs><path d="M13.2 1.2V13.2H1.2Z" fill="url(#eg1)" stroke="#444" stroke-width="1.4" stroke-linejoin="round"/></svg>
<div class="b" style="left:34px;top:218px;width:276px;height:24px;background:#f0f0f0;"></div>
<svg class="b" style="left:37.5px;top:223px" width="20" height="14" viewBox="0 0 20 14"><path d="M0.5 7 C3.5 2.2 7 1 10 1 C13 1 16.5 2.2 19.5 7 C16.5 11.8 13 13 10 13 C7 13 3.5 11.8 0.5 7Z" fill="#9a9a9a"/><circle cx="10" cy="7" r="4.1" fill="#f0f0f0"/><circle cx="10" cy="7" r="2.4" fill="#9a9a9a"/></svg>
<div class="b" style="left:65px;top:220px;width:188px;height:19.5px;background:#8d8d8d;"></div>
<svg class="b" style="left:69px;top:220.5px" width="20" height="19" viewBox="0 0 20 19"><path d="M1 5.5L4 1H18.5V13.5L15 18H1Z" fill="#ececf0" stroke="#555" stroke-width="1.1" stroke-linejoin="round"/><path d="M1 5.5L4 1H18.5L15 5.5Z" fill="#fafafa"/><path d="M1 5.5H15V18M15 5.5L18.5 1" fill="none" stroke="#888" stroke-width="0.9"/><path d="M15 5.5L18.5 1V13.5L15 18Z" fill="#d4d4d4" stroke="#666" stroke-width="0.8"/></svg>
<span class="t" style="left:107.0px;top:223.6px;font-size:13px;color:#fff;font-weight:700;transform:scaleX(1.0605);">60" Fusion Stick v16</span>
<svg class="b" style="left:255px;top:220px" width="20" height="20"><circle cx="9.8" cy="10" r="8.7" fill="#17a6bd"/><text x="4.6" y="14.2" font-family="Liberation Sans, sans-serif" font-weight="700" font-size="12" fill="#fff">C</text><circle cx="15.2" cy="14.6" r="2.6" fill="#fff" stroke="#5a6a70" stroke-width="1"/></svg>
<svg class="b" style="left:282px;top:220px" width="20" height="20"><circle cx="9.7" cy="10" r="7.6" fill="#fff" stroke="#2b2b2b" stroke-width="1.4"/><circle cx="9.7" cy="10" r="3.1" fill="#2b2b2b"/></svg>
<svg class="b" style="left:34px;top:252px" width="12" height="16" viewBox="0 0 12 16"><path d="M1.2 1.4V14.6L10.4 8Z" fill="#fff" stroke="#454545" stroke-width="1.55" stroke-linejoin="round"/></svg>
<div class="b" style="left:56.5px;top:248px;width:167.0px;height:24px;background:#f0f0f0;"></div>
<svg class="b" style="left:60.0px;top:250px" width="20" height="20" viewBox="0 0 20 20"><g transform="translate(10,10)"><g fill="#8f8f8f"><rect x="-2.2" y="-10" width="4.4" height="20" rx="0.8" transform="rotate(0)"/><rect x="-2.2" y="-10" width="4.4" height="20" rx="0.8" transform="rotate(45)"/><rect x="-2.2" y="-10" width="4.4" height="20" rx="0.8" transform="rotate(90)"/><rect x="-2.2" y="-10" width="4.4" height="20" rx="0.8" transform="rotate(135)"/><circle r="7.2"/></g><circle r="3.1" fill="#f0f0f0"/></g></svg>
<span class="t" style="left:98.0px;top:253.5px;font-size:13px;color:#424242;transform:scaleX(1.0170);">Document Settings</span>
<svg class="b" style="left:34px;top:282px" width="12" height="16" viewBox="0 0 12 16"><path d="M1.2 1.4V14.6L10.4 8Z" fill="#fff" stroke="#454545" stroke-width="1.55" stroke-linejoin="round"/></svg>
<div class="b" style="left:56.5px;top:278px;width:137.1px;height:24px;background:#f0f0f0;"></div>
<svg class="b" style="left:60.0px;top:281px" width="21" height="17" viewBox="0 0 21 17"><path d="M0.5 0.5H8.5V2.2H0.5Z" fill="#9c9c9c"/><path d="M0.5 3.2H9L10.2 4.4H20.5V16.5H0.5Z" fill="#9c9c9c"/><path d="M0.5 2.6H8.8" stroke="#c9c9c9" stroke-width="0.8"/></svg>
<span class="t" style="left:98.0px;top:283.5px;font-size:13px;color:#424242;transform:scaleX(1.0504);">Named Views</span>
<svg class="b" style="left:34px;top:312px" width="12" height="16" viewBox="0 0 12 16"><path d="M1.2 1.4V14.6L10.4 8Z" fill="#fff" stroke="#454545" stroke-width="1.55" stroke-linejoin="round"/></svg>
<div class="b" style="left:56.5px;top:308px;width:118.5px;height:24px;background:#f0f0f0;"></div>
<svg class="b" style="left:60.0px;top:313px" width="20" height="14" viewBox="0 0 20 14"><g fill="none" stroke="#b4b4b4" stroke-width="1.2"><path d="M1 7 C4 2.6 7 1.6 10 1.6 C13 1.6 16 2.6 19 7 C16 11.4 13 12.4 10 12.4 C7 12.4 4 11.4 1 7Z"/><circle cx="10" cy="7" r="3.2"/><path d="M3.5 1.2L17 13.2"/><path d="M5.2 0.4L18.6 12.2" stroke="#c8c8c8"/></g></svg>
<svg class="b" style="left:91.0px;top:311px" width="21" height="17" viewBox="0 0 21 17"><path d="M0.5 0.5H8.5V2.2H0.5Z" fill="#9c9c9c"/><path d="M0.5 3.2H9L10.2 4.4H20.5V16.5H0.5Z" fill="#9c9c9c"/><path d="M0.5 2.6H8.8" stroke="#c9c9c9" stroke-width="0.8"/></svg>
<span class="t" style="left:129.0px;top:313.5px;font-size:13px;color:#424242;transform:scaleX(0.9804);">Origin</span>
<svg class="b" style="left:32px;top:343px" width="15" height="15" viewBox="0 0 15 15"><defs><linearGradient id="eg2" x1="0" y1="1" x2="1" y2="0"><stop offset="0" stop-color="#c8c8c8"/><stop offset="1" stop-color="#555"/></linearGradient></defs><path d="M13.2 1.2V13.2H1.2Z" fill="url(#eg2)" stroke="#444" stroke-width="1.4" stroke-linejoin="round"/></svg>
<div class="b" style="left:56.5px;top:338px;width:128.5px;height:24px;background:#f0f0f0;"></div>
<svg class="b" style="left:60.0px;top:343px" width="20" height="14" viewBox="0 0 20 14"><path d="M0.5 7 C3.5 2.2 7 1 10 1 C13 1 16.5 2.2 19.5 7 C16.5 11.8 13 13 10 13 C7 13 3.5 11.8 0.5 7Z" fill="#9a9a9a"/><circle cx="10" cy="7" r="4.1" fill="#f0f0f0"/><circle cx="10" cy="7" r="2.4" fill="#9a9a9a"/></svg>
<svg class="b" style="left:91.0px;top:341px" width="21" height="17" viewBox="0 0 21 17"><path d="M0.5 0.5H8.5V2.2H0.5Z" fill="#9c9c9c"/><path d="M0.5 3.2H9L10.2 4.4H20.5V16.5H0.5Z" fill="#9c9c9c"/><path d="M0.5 2.6H8.8" stroke="#c9c9c9" stroke-width="0.8"/></svg>
<span class="t" style="left:129.0px;top:343.5px;font-size:13px;color:#424242;transform:scaleX(1.0213);">Bodies</span>
<svg class="b" style="left:56.5px;top:372px" width="12" height="16" viewBox="0 0 12 16"><path d="M1.2 1.4V14.6L10.4 8Z" fill="#fff" stroke="#454545" stroke-width="1.55" stroke-linejoin="round"/></svg>
<div class="b" style="left:79px;top:368px;width:148.6px;height:24px;background:#f0f0f0;"></div>
<svg class="b" style="left:82.5px;top:373px" width="20" height="14" viewBox="0 0 20 14"><g fill="none" stroke="#b4b4b4" stroke-width="1.2"><path d="M1 7 C4 2.6 7 1.6 10 1.6 C13 1.6 16 2.6 19 7 C16 11.4 13 12.4 10 12.4 C7 12.4 4 11.4 1 7Z"/><circle cx="10" cy="7" r="3.2"/><path d="M3.5 1.2L17 13.2"/><path d="M5.2 0.4L18.6 12.2" stroke="#c8c8c8"/></g></svg>
<svg class="b" style="left:113.5px;top:371px" width="21" height="17" viewBox="0 0 21 17"><path d="M0.5 0.5H8.5V2.2H0.5Z" fill="#9c9c9c"/><path d="M0.5 3.2H9L10.2 4.4H20.5V16.5H0.5Z" fill="#9c9c9c"/><path d="M0.5 2.6H8.8" stroke="#c9c9c9" stroke-width="0.8"/></svg>
<span class="t" style="left:151.5px;top:373.5px;font-size:13px;color:#424242;transform:scaleX(1.0299);">Solids (14)</span>
<svg class="b" style="left:56.5px;top:402px" width="12" height="16" viewBox="0 0 12 16"><path d="M1.2 1.4V14.6L10.4 8Z" fill="#fff" stroke="#454545" stroke-width="1.55" stroke-linejoin="round"/></svg>
<div class="b" style="left:79px;top:398px;width:203px;height:24px;background:#f0f0f0;"></div>
<svg class="b" style="left:82.5px;top:403px" width="20" height="14" viewBox="0 0 20 14"><path d="M0.5 7 C3.5 2.2 7 1 10 1 C13 1 16.5 2.2 19.5 7 C16.5 11.8 13 13 10 13 C7 13 3.5 11.8 0.5 7Z" fill="#9a9a9a"/><circle cx="10" cy="7" r="4.1" fill="#f0f0f0"/><circle cx="10" cy="7" r="2.4" fill="#9a9a9a"/></svg>
<svg class="b" style="left:113.5px;top:401px" width="21" height="17" viewBox="0 0 21 17"><path d="M0.5 0.5H8.5V2.2H0.5Z" fill="#9c9c9c"/><path d="M0.5 3.2H9L10.2 4.4H20.5V16.5H0.5Z" fill="#9c9c9c"/><path d="M0.5 2.6H8.8" stroke="#c9c9c9" stroke-width="0.8"/></svg>
<span class="t" style="left:151.5px;top:403.5px;font-size:13px;color:#424242;transform:scaleX(1.0327);">Horizontal Stab (16)</span>
<svg class="b" style="left:56.5px;top:432px" width="12" height="16" viewBox="0 0 12 16"><path d="M1.2 1.4V14.6L10.4 8Z" fill="#fff" stroke="#454545" stroke-width="1.55" stroke-linejoin="round"/></svg>
<div class="b" style="left:79px;top:428px;width:163.5px;height:24px;background:#f0f0f0;"></div>
<svg class="b" style="left:82.5px;top:433px" width="20" height="14" viewBox="0 0 20 14"><path d="M0.5 7 C3.5 2.2 7 1 10 1 C13 1 16.5 2.2 19.5 7 C16.5 11.8 13 13 10 13 C7 13 3.5 11.8 0.5 7Z" fill="#9a9a9a"/><circle cx="10" cy="7" r="4.1" fill="#f0f0f0"/><circle cx="10" cy="7" r="2.4" fill="#9a9a9a"/></svg>
<svg class="b" style="left:113.5px;top:431px" width="21" height="17" viewBox="0 0 21 17"><path d="M0.5 0.5H8.5V2.2H0.5Z" fill="#9c9c9c"/><path d="M0.5 3.2H9L10.2 4.4H20.5V16.5H0.5Z" fill="#9c9c9c"/><path d="M0.5 2.6H8.8" stroke="#c9c9c9" stroke-width="0.8"/></svg>
<span class="t" style="left:151.5px;top:433.5px;font-size:13px;color:#424242;transform:scaleX(1.0346);">Elevator (10)</span>
<div class="b" style="left:79px;top:458px;width:163.5px;height:24px;background:#f0f0f0;"></div>
<svg class="b" style="left:82.5px;top:463px" width="20" height="14" viewBox="0 0 20 14"><path d="M0.5 7 C3.5 2.2 7 1 10 1 C13 1 16.5 2.2 19.5 7 C16.5 11.8 13 13 10 13 C7 13 3.5 11.8 0.5 7Z" fill="#9a9a9a"/><circle cx="10" cy="7" r="4.1" fill="#f0f0f0"/><circle cx="10" cy="7" r="2.4" fill="#9a9a9a"/></svg>
<svg class="b" style="left:113.5px;top:461px" width="21" height="17" viewBox="0 0 21 17"><path d="M0.5 0.5H8.5V2.2H0.5Z" fill="#9c9c9c"/><path d="M0.5 3.2H9L10.2 4.4H20.5V16.5H0.5Z" fill="#9c9c9c"/><path d="M0.5 2.6H8.8" stroke="#c9c9c9" stroke-width="0.8"/></svg>
<span class="t" style="left:151.5px;top:463.5px;font-size:13px;color:#424242;transform:scaleX(1.0412);">Vertical Stab</span>
<div class="b" style="left:79px;top:488px;width:128.7px;height:24px;background:#f0f0f0;"></div>
<svg class="b" style="left:82.5px;top:493px" width="20" height="14" viewBox="0 0 20 14"><path d="M0.5 7 C3.5 2.2 7 1 10 1 C13 1 16.5 2.2 19.5 7 C16.5 11.8 13 13 10 13 C7 13 3.5 11.8 0.5 7Z" fill="#9a9a9a"/><circle cx="10" cy="7" r="4.1" fill="#f0f0f0"/><circle cx="10" cy="7" r="2.4" fill="#9a9a9a"/></svg>
<svg class="b" style="left:113.5px;top:491px" width="21" height="17" viewBox="0 0 21 17"><path d="M0.5 0.5H8.5V2.2H0.5Z" fill="#9c9c9c"/><path d="M0.5 3.2H9L10.2 4.4H20.5V16.5H0.5Z" fill="#9c9c9c"/><path d="M0.5 2.6H8.8" stroke="#c9c9c9" stroke-width="0.8"/></svg>
<span class="t" style="left:151.5px;top:493.5px;font-size:13px;color:#424242;transform:scaleX(1.0084);">Rudder</span>
<div class="b" style="left:79px;top:518px;width:113.4px;height:24px;background:#f0f0f0;"></div>
<svg class="b" style="left:82.5px;top:523px" width="20" height="14" viewBox="0 0 20 14"><path d="M0.5 7 C3.5 2.2 7 1 10 1 C13 1 16.5 2.2 19.5 7 C16.5 11.8 13 13 10 13 C7 13 3.5 11.8 0.5 7Z" fill="#9a9a9a"/><circle cx="10" cy="7" r="4.1" fill="#f0f0f0"/><circle cx="10" cy="7" r="2.4" fill="#9a9a9a"/></svg>
<svg class="b" style="left:113.5px;top:521px" width="21" height="17" viewBox="0 0 21 17"><path d="M0.5 0.5H8.5V2.2H0.5Z" fill="#9c9c9c"/><path d="M0.5 3.2H9L10.2 4.4H20.5V16.5H0.5Z" fill="#9c9c9c"/><path d="M0.5 2.6H8.8" stroke="#c9c9c9" stroke-width="0.8"/></svg>
<span class="t" style="left:151.5px;top:523.5px;font-size:13px;color:#424242;transform:scaleX(1.0034);">Fuse</span>
<div class="b" style="left:79px;top:548px;width:118.3px;height:24px;background:#f0f0f0;"></div>
<svg class="b" style="left:82.5px;top:553px" width="20" height="14" viewBox="0 0 20 14"><path d="M0.5 7 C3.5 2.2 7 1 10 1 C13 1 16.5 2.2 19.5 7 C16.5 11.8 13 13 10 13 C7 13 3.5 11.8 0.5 7Z" fill="#9a9a9a"/><circle cx="10" cy="7" r="4.1" fill="#f0f0f0"/><circle cx="10" cy="7" r="2.4" fill="#9a9a9a"/></svg>
<svg class="b" style="left:113.5px;top:551px" width="21" height="17" viewBox="0 0 21 17"><path d="M0.5 0.5H8.5V2.2H0.5Z" fill="#9c9c9c"/><path d="M0.5 3.2H9L10.2 4.4H20.5V16.5H0.5Z" fill="#9c9c9c"/><path d="M0.5 2.6H8.8" stroke="#c9c9c9" stroke-width="0.8"/></svg>
<span class="t" style="left:151.5px;top:553.5px;font-size:13px;color:#424242;transform:scaleX(0.9791);">Wing</span>
<svg class="b" style="left:34px;top:582px" width="12" height="16" viewBox="0 0 12 16"><path d="M1.2 1.4V14.6L10.4 8Z" fill="#fff" stroke="#454545" stroke-width="1.55" stroke-linejoin="round"/></svg>
<div class="b" style="left:56.5px;top:578px;width:148.3px;height:24px;background:#f0f0f0;"></div>
<svg class="b" style="left:60.0px;top:583px" width="20" height="14" viewBox="0 0 20 14"><g fill="none" stroke="#b4b4b4" stroke-width="1.2"><path d="M1 7 C4 2.6 7 1.6 10 1.6 C13 1.6 16 2.6 19 7 C16 11.4 13 12.4 10 12.4 C7 12.4 4 11.4 1 7Z"/><circle cx="10" cy="7" r="3.2"/><path d="M3.5 1.2L17 13.2"/><path d="M5.2 0.4L18.6 12.2" stroke="#c8c8c8"/></g></svg>
<svg class="b" style="left:91.0px;top:581px" width="21" height="17" viewBox="0 0 21 17"><path d="M0.5 0.5H8.5V2.2H0.5Z" fill="#9c9c9c"/><path d="M0.5 3.2H9L10.2 4.4H20.5V16.5H0.5Z" fill="#9c9c9c"/><path d="M0.5 2.6H8.8" stroke="#c9c9c9" stroke-width="0.8"/></svg>
<span class="t" style="left:129.0px;top:583.5px;font-size:13px;color:#424242;transform:scaleX(1.0465);">Canvases</span>
<svg class="b" style="left:34px;top:612px" width="12" height="16" viewBox="0 0 12 16"><path d="M1.2 1.4V14.6L10.4 8Z" fill="#fff" stroke="#454545" stroke-width="1.55" stroke-linejoin="round"/></svg>
<div class="b" style="left:56.5px;top:608px;width:143.2px;height:24px;background:#f0f0f0;"></div>
<svg class="b" style="left:60.0px;top:613px" width="20" height="14" viewBox="0 0 20 14"><path d="M0.5 7 C3.5 2.2 7 1 10 1 C13 1 16.5 2.2 19.5 7 C16.5 11.8 13 13 10 13 C7 13 3.5 11.8 0.5 7Z" fill="#9a9a9a"/><circle cx="10" cy="7" r="4.1" fill="#f0f0f0"/><circle cx="10" cy="7" r="2.4" fill="#9a9a9a"/></svg>
<svg class="b" style="left:91.0px;top:611px" width="21" height="17" viewBox="0 0 21 17"><path d="M0.5 0.5H8.5V2.2H0.5Z" fill="#9c9c9c"/><path d="M0.5 3.2H9L10.2 4.4H20.5V16.5H0.5Z" fill="#9c9c9c"/><path d="M0.5 2.6H8.8" stroke="#c9c9c9" stroke-width="0.8"/></svg>
<span class="t" style="left:129.0px;top:613.5px;font-size:13px;color:#424242;transform:scaleX(1.0397);">Sketches</span>
<svg class="b" style="left:34px;top:642px" width="12" height="16" viewBox="0 0 12 16"><path d="M1.2 1.4V14.6L10.4 8Z" fill="#fff" stroke="#454545" stroke-width="1.55" stroke-linejoin="round"/></svg>
<div class="b" style="left:56.5px;top:638px;width:163.4px;height:24px;background:#f0f0f0;"></div>
<svg class="b" style="left:60.0px;top:643px" width="20" height="14" viewBox="0 0 20 14"><path d="M0.5 7 C3.5 2.2 7 1 10 1 C13 1 16.5 2.2 19.5 7 C16.5 11.8 13 13 10 13 C7 13 3.5 11.8 0.5 7Z" fill="#9a9a9a"/><circle cx="10" cy="7" r="4.1" fill="#f0f0f0"/><circle cx="10" cy="7" r="2.4" fill="#9a9a9a"/></svg>
<svg class="b" style="left:91.0px;top:641px" width="21" height="17" viewBox="0 0 21 17"><path d="M0.5 0.5H8.5V2.2H0.5Z" fill="#9c9c9c"/><path d="M0.5 3.2H9L10.2 4.4H20.5V16.5H0.5Z" fill="#9c9c9c"/><path d="M0.5 2.6H8.8" stroke="#c9c9c9" stroke-width="0.8"/></svg>
<span class="t" style="left:129.0px;top:643.5px;font-size:13px;color:#424242;transform:scaleX(1.0386);">Construction</span>
<svg class="b" style="left:0;top:984px" width="142" height="20" viewBox="0 0 142 20"><g fill="#333"><rect x="-1" y="2.5" width="2.2" height="15"/><path d="M12.4 2.5V17.5L1.6 10Z"/><path d="M40.6 2.6V17.4L28 10Z"/><rect x="42" y="5.6" width="2.6" height="8.8"/><path d="M60.6 1.4V18.6L75.2 10Z"/><rect x="90" y="5.6" width="2.6" height="8.8"/><path d="M94 2.6V17.4L106.4 10Z"/><path d="M122.6 2.5V17.5L133.6 10Z"/><rect x="134.6" y="2.5" width="2.8" height="15"/></g></svg>
<svg class="b" style="left:0;top:975px" width="1868" height="54" viewBox="0 975 1868 54">
<path d="M176.3 1013.2H1587.0" stroke="#c9c9c9" stroke-width="2" fill="none"/>
<path d="M176.9 1006.5V1013.5M206.9 1006.5V1013.5M236.9 1006.5V1013.5M266.8 1006.5V1013.5M296.8 1006.5V1013.5M326.8 1006.5V1013.5M356.8 1006.5V1013.5M386.8 1006.5V1013.5M416.7 1006.5V1013.5M446.7 1006.5V1013.5M476.7 1006.5V1013.5M506.7 1006.5V1013.5M536.7 1006.5V1013.5M566.6 1006.5V1013.5M596.6 1006.5V1013.5M626.6 1006.5V1013.5M656.6 1006.5V1013.5M686.6 1006.5V1013.5M716.5 1006.5V1013.5M746.5 1006.5V1013.5M776.5 1006.5V1013.5M806.5 1006.5V1013.5M836.5 1006.5V1013.5M866.4 1006.5V1013.5M896.4 1006.5V1013.5M926.4 1006.5V1013.5M956.4 1006.5V1013.5M986.4 1006.5V1013.5M1016.3 1006.5V1013.5M1046.3 1006.5V1013.5M1076.3 1006.5V1013.5M1106.3 1006.5V1013.5M1136.3 1006.5V1013.5M1166.2 1006.5V1013.5M1196.2 1006.5V1013.5M1226.2 1006.5V1013.5M1256.2 1006.5V1013.5M1286.2 1006.5V1013.5M1316.1 1006.5V1013.5M1346.1 1006.5V1013.5M1376.1 1006.5V1013.5M1406.1 1006.5V1013.5M1436.1 1006.5V1013.5M1466.0 1006.5V1013.5M1496.0 1006.5V1013.5M1526.0 1006.5V1013.5M1556.0 1006.5V1013.5M1586.0 1006.5V1013.5" stroke="#c9c9c9" stroke-width="1.6" fill="none"/>
<g transform="translate(164.3,981)"><rect x="3.5" y="3" width="17" height="17" fill="#55a8e8"/><rect x="3.5" y="3" width="17" height="8" fill="#74bdf2"/><path d="M3.5 13.5 C6 9.5 8 9 10.5 12.5 C12 14 13 14.2 14.5 12.6 C16.5 10.6 18.5 11.4 20.5 13.6 V20H3.5Z" fill="#3585cc"/><circle cx="15.6" cy="7.6" r="2.4" fill="#f4f3c0"/></g>
<g transform="translate(194.3,981)"><rect x="3.5" y="3" width="17" height="17" fill="#55a8e8"/><rect x="3.5" y="3" width="17" height="8" fill="#74bdf2"/><path d="M3.5 13.5 C6 9.5 8 9 10.5 12.5 C12 14 13 14.2 14.5 12.6 C16.5 10.6 18.5 11.4 20.5 13.6 V20H3.5Z" fill="#3585cc"/><circle cx="15.6" cy="7.6" r="2.4" fill="#f4f3c0"/></g>
<g transform="translate(224.3,981)"><path d="M4.5 4.5H19.5V13M4.5 4.5V19.5H13" fill="none" stroke="#333" stroke-width="1.2" stroke-dasharray="4 2.2"/><g fill="#2f7fd0"><rect x="3" y="3" width="3" height="3"/><rect x="18" y="3" width="3" height="3"/><rect x="3" y="18" width="3" height="3"/></g><path d="M13.4 21.2L14.4 18L20 12.4L22.6 15L17 20.6Z" fill="#f0a93a"/><path d="M20 12.4L21.2 11.2Q22.6 10.6 23.6 11.8Q24.4 13 23.8 13.8L22.6 15Z" fill="#e8483a"/><path d="M13.4 21.2L14.4 18L16.6 20.2Z" fill="#444"/></g>
<g transform="translate(254.2,981)"><path d="M2.5 6.2L5.5 3H17.5V15.6L14.5 19H2.5Z" fill="#58a4e4"/><path d="M2.5 6.2H14.5V19H2.5Z" fill="#4c9ce0"/><path d="M14.5 6.2L17.5 3V15.6L14.5 19Z" fill="#3a86cf"/><path d="M2.5 6.2L5.5 3H17.5L14.5 6.2Z" fill="#7fc0f2"/><path d="M2.5 19H14.5L17.5 15.6V18L14.5 21.4H2.5Z" fill="#c9cdd2"/><path d="M20.6 18V5" stroke="#222" stroke-width="1.3"/><path d="M18.4 6.6L20.6 2.8L22.8 6.6Z" fill="#222"/></g>
<g transform="translate(284.2,981)"><path d="M4.5 4.5H19.5V13M4.5 4.5V19.5H13" fill="none" stroke="#333" stroke-width="1.2" stroke-dasharray="4 2.2"/><g fill="#2f7fd0"><rect x="3" y="3" width="3" height="3"/><rect x="18" y="3" width="3" height="3"/><rect x="3" y="18" width="3" height="3"/></g><path d="M13.4 21.2L14.4 18L20 12.4L22.6 15L17 20.6Z" fill="#f0a93a"/><path d="M20 12.4L21.2 11.2Q22.6 10.6 23.6 11.8Q24.4 13 23.8 13.8L22.6 15Z" fill="#e8483a"/><path d="M13.4 21.2L14.4 18L16.6 20.2Z" fill="#444"/></g>
<g transform="translate(314.2,981)"><path d="M2.5 6.2L5.5 3H17.5V15.6L14.5 19H2.5Z" fill="#58a4e4"/><path d="M2.5 6.2H14.5V19H2.5Z" fill="#4c9ce0"/><path d="M14.5 6.2L17.5 3V15.6L14.5 19Z" fill="#3a86cf"/><path d="M2.5 6.2L5.5 3H17.5L14.5 6.2Z" fill="#7fc0f2"/><path d="M2.5 19H14.5L17.5 15.6V18L14.5 21.4H2.5Z" fill="#c9cdd2"/><path d="M20.6 18V5" stroke="#222" stroke-width="1.3"/><path d="M18.4 6.6L20.6 2.8L22.8 6.6Z" fill="#222"/></g>
<g transform="translate(344.2,981)"><path d="M10.6 4.5V19.3H3.8Z" fill="#fff" stroke="#555" stroke-width="1.2" stroke-linejoin="round"/><path d="M13 3.6V20H21Z" fill="#5aa5e3"/></g>
<g transform="translate(374.2,981)"><path d="M4.5 4.5H19.5V13M4.5 4.5V19.5H13" fill="none" stroke="#333" stroke-width="1.2" stroke-dasharray="4 2.2"/><g fill="#2f7fd0"><rect x="3" y="3" width="3" height="3"/><rect x="18" y="3" width="3" height="3"/><rect x="3" y="18" width="3" height="3"/></g><path d="M13.4 21.2L14.4 18L20 12.4L22.6 15L17 20.6Z" fill="#f0a93a"/><path d="M20 12.4L21.2 11.2Q22.6 10.6 23.6 11.8Q24.4 13 23.8 13.8L22.6 15Z" fill="#e8483a"/><path d="M13.4 21.2L14.4 18L16.6 20.2Z" fill="#444"/></g>
<g transform="translate(404.1,981)"><path d="M2.5 6.2L5.5 3H17.5V15.6L14.5 19H2.5Z" fill="#58a4e4"/><path d="M2.5 6.2H14.5V19H2.5Z" fill="#4c9ce0"/><path d="M14.5 6.2L17.5 3V15.6L14.5 19Z" fill="#3a86cf"/><path d="M2.5 6.2L5.5 3H17.5L14.5 6.2Z" fill="#7fc0f2"/><path d="M2.5 19H14.5L17.5 15.6V18L14.5 21.4H2.5Z" fill="#c9cdd2"/><path d="M20.6 18V5" stroke="#222" stroke-width="1.3"/><path d="M18.4 6.6L20.6 2.8L22.8 6.6Z" fill="#222"/></g>
<g transform="translate(434.1,981)"><path d="M2.5 6.2L5.5 3H17.5V15.6L14.5 19H2.5Z" fill="#58a4e4"/><path d="M2.5 6.2H14.5V19H2.5Z" fill="#4c9ce0"/><path d="M14.5 6.2L17.5 3V15.6L14.5 19Z" fill="#3a86cf"/><path d="M2.5 6.2L5.5 3H17.5L14.5 6.2Z" fill="#7fc0f2"/><path d="M2.5 19H14.5L17.5 15.6V18L14.5 21.4H2.5Z" fill="#c9cdd2"/><path d="M20.6 18V5" stroke="#222" stroke-width="1.3"/><path d="M18.4 6.6L20.6 2.8L22.8 6.6Z" fill="#222"/></g>
<g transform="translate(464.1,981)"><path d="M10.6 4.5V19.3H3.8Z" fill="#fff" stroke="#555" stroke-width="1.2" stroke-linejoin="round"/><path d="M13 3.6V20H21Z" fill="#5aa5e3"/></g>
<g transform="translate(494.1,981)"><path d="M4.5 4.5H19.5V13M4.5 4.5V19.5H13" fill="none" stroke="#333" stroke-width="1.2" stroke-dasharray="4 2.2"/><g fill="#2f7fd0"><rect x="3" y="3" width="3" height="3"/><rect x="18" y="3" width="3" height="3"/><rect x="3" y="18" width="3" height="3"/></g><path d="M13.4 21.2L14.4 18L20 12.4L22.6 15L17 20.6Z" fill="#f0a93a"/><path d="M20 12.4L21.2 11.2Q22.6 10.6 23.6 11.8Q24.4 13 23.8 13.8L22.6 15Z" fill="#e8483a"/><path d="M13.4 21.2L14.4 18L16.6 20.2Z" fill="#444"/></g>
<g transform="translate(524.1,981)"><path d="M2.5 6.2L5.5 3H17.5V15.6L14.5 19H2.5Z" fill="#58a4e4"/><path d="M2.5 6.2H14.5V19H2.5Z" fill="#4c9ce0"/><path d="M14.5 6.2L17.5 3V15.6L14.5 19Z" fill="#3a86cf"/><path d="M2.5 6.2L5.5 3H17.5L14.5 6.2Z" fill="#7fc0f2"/><path d="M2.5 19H14.5L17.5 15.6V18L14.5 21.4H2.5Z" fill="#c9cdd2"/><path d="M20.6 18V5" stroke="#222" stroke-width="1.3"/><path d="M18.4 6.6L20.6 2.8L22.8 6.6Z" fill="#222"/></g>
<g transform="translate(554.0,981)"><path d="M2.5 6.2L5.5 3H17.5V15.6L14.5 19H2.5Z" fill="#58a4e4"/><path d="M2.5 6.2H14.5V19H2.5Z" fill="#4c9ce0"/><path d="M14.5 6.2L17.5 3V15.6L14.5 19Z" fill="#3a86cf"/><path d="M2.5 6.2L5.5 3H17.5L14.5 6.2Z" fill="#7fc0f2"/><path d="M2.5 19H14.5L17.5 15.6V18L14.5 21.4H2.5Z" fill="#c9cdd2"/><path d="M20.6 18V5" stroke="#222" stroke-width="1.3"/><path d="M18.4 6.6L20.6 2.8L22.8 6.6Z" fill="#222"/></g>
<g transform="translate(584.0,981)"><path d="M4.5 4.5H19.5V13M4.5 4.5V19.5H13" fill="none" stroke="#333" stroke-width="1.2" stroke-dasharray="4 2.2"/><g fill="#2f7fd0"><rect x="3" y="3" width="3" height="3"/><rect x="18" y="3" width="3" height="3"/><rect x="3" y="18" width="3" height="3"/></g><path d="M13.4 21.2L14.4 18L20 12.4L22.6 15L17 20.6Z" fill="#f0a93a"/><path d="M20 12.4L21.2 11.2Q22.6 10.6 23.6 11.8Q24.4 13 23.8 13.8L22.6 15Z" fill="#e8483a"/><path d="M13.4 21.2L14.4 18L16.6 20.2Z" fill="#444"/></g>
<g transform="translate(614.0,981)"><path d="M2.5 6.2L5.5 3H17.5V15.6L14.5 19H2.5Z" fill="#58a4e4"/><path d="M2.5 6.2H14.5V19H2.5Z" fill="#4c9ce0"/><path d="M14.5 6.2L17.5 3V15.6L14.5 19Z" fill="#3a86cf"/><path d="M2.5 6.2L5.5 3H17.5L14.5 6.2Z" fill="#7fc0f2"/><path d="M2.5 19H14.5L17.5 15.6V18L14.5 21.4H2.5Z" fill="#c9cdd2"/><path d="M20.6 18V5" stroke="#222" stroke-width="1.3"/><path d="M18.4 6.6L20.6 2.8L22.8 6.6Z" fill="#222"/></g>
<g transform="translate(644.0,981)"><path d="M2.5 6.2L5.5 3H17.5V15.6L14.5 19H2.5Z" fill="#58a4e4"/><path d="M2.5 6.2H14.5V19H2.5Z" fill="#4c9ce0"/><path d="M14.5 6.2L17.5 3V15.6L14.5 19Z" fill="#3a86cf"/><path d="M2.5 6.2L5.5 3H17.5L14.5 6.2Z" fill="#7fc0f2"/><path d="M2.5 19H14.5L17.5 15.6V18L14.5 21.4H2.5Z" fill="#c9cdd2"/><path d="M20.6 18V5" stroke="#222" stroke-width="1.3"/><path d="M18.4 6.6L20.6 2.8L22.8 6.6Z" fill="#222"/></g>
<g transform="translate(674.0,981)"><path d="M10.6 4.5V19.3H3.8Z" fill="#fff" stroke="#555" stroke-width="1.2" stroke-linejoin="round"/><path d="M13 3.6V20H21Z" fill="#5aa5e3"/></g>
<g transform="translate(703.9,981)"><path d="M10.6 4.5V19.3H3.8Z" fill="#fff" stroke="#555" stroke-width="1.2" stroke-linejoin="round"/><path d="M13 3.6V20H21Z" fill="#5aa5e3"/></g>
<g transform="translate(733.9,981)"><path d="M3 12.5H9V20.5H3Z" fill="#e3e3e3" stroke="#666" stroke-width="1"/><path d="M13 2.2L22.4 11.4L13.4 20.6L4 11.4Z" fill="#d98a4f"/><path d="M9.5 9.5L16.8 8L15.4 15.2Z" fill="#e9f1e4" stroke="#4f9f55" stroke-width="1.1"/><path d="M12 13L15 10" stroke="#3c9a48" stroke-width="1.3"/></g>
<g transform="translate(763.9,981)"><path d="M4.5 4.5H19.5V13M4.5 4.5V19.5H13" fill="none" stroke="#333" stroke-width="1.2" stroke-dasharray="4 2.2"/><g fill="#2f7fd0"><rect x="3" y="3" width="3" height="3"/><rect x="18" y="3" width="3" height="3"/><rect x="3" y="18" width="3" height="3"/></g><path d="M13.4 21.2L14.4 18L20 12.4L22.6 15L17 20.6Z" fill="#f0a93a"/><path d="M20 12.4L21.2 11.2Q22.6 10.6 23.6 11.8Q24.4 13 23.8 13.8L22.6 15Z" fill="#e8483a"/><path d="M13.4 21.2L14.4 18L16.6 20.2Z" fill="#444"/></g>
<g transform="translate(793.9,981)"><path d="M2.5 6.2L5.5 3H17.5V15.6L14.5 19H2.5Z" fill="#58a4e4"/><path d="M2.5 6.2H14.5V19H2.5Z" fill="#4c9ce0"/><path d="M14.5 6.2L17.5 3V15.6L14.5 19Z" fill="#3a86cf"/><path d="M2.5 6.2L5.5 3H17.5L14.5 6.2Z" fill="#7fc0f2"/><path d="M2.5 19H14.5L17.5 15.6V18L14.5 21.4H2.5Z" fill="#c9cdd2"/><path d="M20.6 18V5" stroke="#222" stroke-width="1.3"/><path d="M18.4 6.6L20.6 2.8L22.8 6.6Z" fill="#222"/></g>
<g transform="translate(823.9,981)"><path d="M4.5 4.5H19.5V13M4.5 4.5V19.5H13" fill="none" stroke="#333" stroke-width="1.2" stroke-dasharray="4 2.2"/><g fill="#2f7fd0"><rect x="3" y="3" width="3" height="3"/><rect x="18" y="3" width="3" height="3"/><rect x="3" y="18" width="3" height="3"/></g><path d="M13.4 21.2L14.4 18L20 12.4L22.6 15L17 20.6Z" fill="#f0a93a"/><path d="M20 12.4L21.2 11.2Q22.6 10.6 23.6 11.8Q24.4 13 23.8 13.8L22.6 15Z" fill="#e8483a"/><path d="M13.4 21.2L14.4 18L16.6 20.2Z" fill="#444"/></g>
<g transform="translate(853.8,981)"><path d="M2.5 6.2L5.5 3H17.5V15.6L14.5 19H2.5Z" fill="#58a4e4"/><path d="M2.5 6.2H14.5V19H2.5Z" fill="#4c9ce0"/><path d="M14.5 6.2L17.5 3V15.6L14.5 19Z" fill="#3a86cf"/><path d="M2.5 6.2L5.5 3H17.5L14.5 6.2Z" fill="#7fc0f2"/><path d="M2.5 19H14.5L17.5 15.6V18L14.5 21.4H2.5Z" fill="#c9cdd2"/><path d="M20.6 18V5" stroke="#222" stroke-width="1.3"/><path d="M18.4 6.6L20.6 2.8L22.8 6.6Z" fill="#222"/></g>
<g transform="translate(883.8,981)"><path d="M10.6 4.5V19.3H3.8Z" fill="#fff" stroke="#555" stroke-width="1.2" stroke-linejoin="round"/><path d="M13 3.6V20H21Z" fill="#5aa5e3"/></g>
<g transform="translate(913.8,981)"><path d="M3 12.5H9V20.5H3Z" fill="#e3e3e3" stroke="#666" stroke-width="1"/><path d="M13 2.2L22.4 11.4L13.4 20.6L4 11.4Z" fill="#d98a4f"/><path d="M9.5 9.5L16.8 8L15.4 15.2Z" fill="#e9f1e4" stroke="#4f9f55" stroke-width="1.1"/><path d="M12 13L15 10" stroke="#3c9a48" stroke-width="1.3"/></g>
<g transform="translate(943.8,981)"><path d="M4.5 4.5H19.5V13M4.5 4.5V19.5H13" fill="none" stroke="#333" stroke-width="1.2" stroke-dasharray="4 2.2"/><g fill="#2f7fd0"><rect x="3" y="3" width="3" height="3"/><rect x="18" y="3" width="3" height="3"/><rect x="3" y="18" width="3" height="3"/></g><path d="M13.4 21.2L14.4 18L20 12.4L22.6 15L17 20.6Z" fill="#f0a93a"/><path d="M20 12.4L21.2 11.2Q22.6 10.6 23.6 11.8Q24.4 13 23.8 13.8L22.6 15Z" fill="#e8483a"/><path d="M13.4 21.2L14.4 18L16.6 20.2Z" fill="#444"/></g>
<g transform="translate(973.8,981)"><path d="M4.5 4.5H19.5V13M4.5 4.5V19.5H13" fill="none" stroke="#333" stroke-width="1.2" stroke-dasharray="4 2.2"/><g fill="#2f7fd0"><rect x="3" y="3" width="3" height="3"/><rect x="18" y="3" width="3" height="3"/><rect x="3" y="18" width="3" height="3"/></g><path d="M13.4 21.2L14.4 18L20 12.4L22.6 15L17 20.6Z" fill="#f0a93a"/><path d="M20 12.4L21.2 11.2Q22.6 10.6 23.6 11.8Q24.4 13 23.8 13.8L22.6 15Z" fill="#e8483a"/><path d="M13.4 21.2L14.4 18L16.6 20.2Z" fill="#444"/></g>
<g transform="translate(1003.7,981)"><path d="M3 2.6H21.8V11.6L18.4 17H6.4L3 11.6Z" fill="#55a3e4"/><path d="M3 2.6H21.8V4.8H3Z" fill="#7fc0f2"/><path d="M3 11.6L6.4 17H18.4L21.8 11.6Z" fill="#3b86cf"/><circle cx="12.6" cy="17.2" r="4.5" fill="#fff" stroke="#444" stroke-width="1.2"/></g>
<g transform="translate(1033.7,981)"><path d="M3 2.6H21.8V11.6L18.4 17H6.4L3 11.6Z" fill="#55a3e4"/><path d="M3 2.6H21.8V4.8H3Z" fill="#7fc0f2"/><path d="M3 11.6L6.4 17H18.4L21.8 11.6Z" fill="#3b86cf"/><circle cx="12.6" cy="17.2" r="4.5" fill="#fff" stroke="#444" stroke-width="1.2"/></g>
<g transform="translate(1063.7,981)"><path d="M10.6 4.5V19.3H3.8Z" fill="#fff" stroke="#555" stroke-width="1.2" stroke-linejoin="round"/><path d="M13 3.6V20H21Z" fill="#5aa5e3"/></g>
<g transform="translate(1093.7,981)"><path d="M4.5 4.5H19.5V13M4.5 4.5V19.5H13" fill="none" stroke="#333" stroke-width="1.2" stroke-dasharray="4 2.2"/><g fill="#2f7fd0"><rect x="3" y="3" width="3" height="3"/><rect x="18" y="3" width="3" height="3"/><rect x="3" y="18" width="3" height="3"/></g><path d="M13.4 21.2L14.4 18L20 12.4L22.6 15L17 20.6Z" fill="#f0a93a"/><path d="M20 12.4L21.2 11.2Q22.6 10.6 23.6 11.8Q24.4 13 23.8 13.8L22.6 15Z" fill="#e8483a"/><path d="M13.4 21.2L14.4 18L16.6 20.2Z" fill="#444"/></g>
<g transform="translate(1123.7,981)"><path d="M2.5 6.2L5.5 3H17.5V15.6L14.5 19H2.5Z" fill="#58a4e4"/><path d="M2.5 6.2H14.5V19H2.5Z" fill="#4c9ce0"/><path d="M14.5 6.2L17.5 3V15.6L14.5 19Z" fill="#3a86cf"/><path d="M2.5 6.2L5.5 3H17.5L14.5 6.2Z" fill="#7fc0f2"/><path d="M2.5 19H14.5L17.5 15.6V18L14.5 21.4H2.5Z" fill="#c9cdd2"/><path d="M20.6 18V5" stroke="#222" stroke-width="1.3"/><path d="M18.4 6.6L20.6 2.8L22.8 6.6Z" fill="#222"/></g>
<g transform="translate(1153.6,981)"><path d="M10.6 4.5V19.3H3.8Z" fill="#fff" stroke="#555" stroke-width="1.2" stroke-linejoin="round"/><path d="M13 3.6V20H21Z" fill="#5aa5e3"/></g>
<g transform="translate(1183.6,981)"><path d="M4 7.6L7 3.6H13.6Q20.6 4.6 21.4 11.6V17L18.4 20.6H4Z" fill="#d9d9d9" stroke="#555" stroke-width="1.1" stroke-linejoin="round"/><path d="M12.6 3.6H13.6Q20.6 4.6 21.4 11.6V13Q20.4 7.6 14.6 6.6L12.6 6.4Z" fill="#4e9ee2"/><path d="M4 7.6H11.6Q17.4 8.6 18.4 14.4V20.6" fill="none" stroke="#777" stroke-width="0.9"/></g>
<g transform="translate(1213.6,981)"><path d="M4.5 4.5H19.5V13M4.5 4.5V19.5H13" fill="none" stroke="#333" stroke-width="1.2" stroke-dasharray="4 2.2"/><g fill="#2f7fd0"><rect x="3" y="3" width="3" height="3"/><rect x="18" y="3" width="3" height="3"/><rect x="3" y="18" width="3" height="3"/></g><path d="M13.4 21.2L14.4 18L20 12.4L22.6 15L17 20.6Z" fill="#f0a93a"/><path d="M20 12.4L21.2 11.2Q22.6 10.6 23.6 11.8Q24.4 13 23.8 13.8L22.6 15Z" fill="#e8483a"/><path d="M13.4 21.2L14.4 18L16.6 20.2Z" fill="#444"/></g>
<g transform="translate(1243.6,981)"><path d="M2.5 6.2L5.5 3H17.5V15.6L14.5 19H2.5Z" fill="#58a4e4"/><path d="M2.5 6.2H14.5V19H2.5Z" fill="#4c9ce0"/><path d="M14.5 6.2L17.5 3V15.6L14.5 19Z" fill="#3a86cf"/><path d="M2.5 6.2L5.5 3H17.5L14.5 6.2Z" fill="#7fc0f2"/><path d="M2.5 19H14.5L17.5 15.6V18L14.5 21.4H2.5Z" fill="#c9cdd2"/><path d="M20.6 18V5" stroke="#222" stroke-width="1.3"/><path d="M18.4 6.6L20.6 2.8L22.8 6.6Z" fill="#222"/></g>
<g transform="translate(1273.6,981)"><path d="M2.5 6.2L5.5 3H17.5V15.6L14.5 19H2.5Z" fill="#58a4e4"/><path d="M2.5 6.2H14.5V19H2.5Z" fill="#4c9ce0"/><path d="M14.5 6.2L17.5 3V15.6L14.5 19Z" fill="#3a86cf"/><path d="M2.5 6.2L5.5 3H17.5L14.5 6.2Z" fill="#7fc0f2"/><path d="M2.5 19H14.5L17.5 15.6V18L14.5 21.4H2.5Z" fill="#c9cdd2"/><path d="M20.6 18V5" stroke="#222" stroke-width="1.3"/><path d="M18.4 6.6L20.6 2.8L22.8 6.6Z" fill="#222"/></g>
<g transform="translate(1303.5,981)"><path d="M10.6 4.5V19.3H3.8Z" fill="#fff" stroke="#555" stroke-width="1.2" stroke-linejoin="round"/><path d="M13 3.6V20H21Z" fill="#5aa5e3"/></g>
<g transform="translate(1333.5,981)"><path d="M10.6 4.5V19.3H3.8Z" fill="#fff" stroke="#555" stroke-width="1.2" stroke-linejoin="round"/><path d="M13 3.6V20H21Z" fill="#5aa5e3"/></g>
<g transform="translate(1363.5,981)"><path d="M10.6 4.5V19.3H3.8Z" fill="#fff" stroke="#555" stroke-width="1.2" stroke-linejoin="round"/><path d="M13 3.6V20H21Z" fill="#5aa5e3"/></g>
<g transform="translate(1393.5,981)"><path d="M4.5 4.5H19.5V13M4.5 4.5V19.5H13" fill="none" stroke="#333" stroke-width="1.2" stroke-dasharray="4 2.2"/><g fill="#2f7fd0"><rect x="3" y="3" width="3" height="3"/><rect x="18" y="3" width="3" height="3"/><rect x="3" y="18" width="3" height="3"/></g><path d="M13.4 21.2L14.4 18L20 12.4L22.6 15L17 20.6Z" fill="#f0a93a"/><path d="M20 12.4L21.2 11.2Q22.6 10.6 23.6 11.8Q24.4 13 23.8 13.8L22.6 15Z" fill="#e8483a"/><path d="M13.4 21.2L14.4 18L16.6 20.2Z" fill="#444"/></g>
<g transform="translate(1423.5,981)"><path d="M2.5 6.2L5.5 3H17.5V15.6L14.5 19H2.5Z" fill="#58a4e4"/><path d="M2.5 6.2H14.5V19H2.5Z" fill="#4c9ce0"/><path d="M14.5 6.2L17.5 3V15.6L14.5 19Z" fill="#3a86cf"/><path d="M2.5 6.2L5.5 3H17.5L14.5 6.2Z" fill="#7fc0f2"/><path d="M2.5 19H14.5L17.5 15.6V18L14.5 21.4H2.5Z" fill="#c9cdd2"/><path d="M20.6 18V5" stroke="#222" stroke-width="1.3"/><path d="M18.4 6.6L20.6 2.8L22.8 6.6Z" fill="#222"/></g>
<g transform="translate(1453.4,981)"><path d="M4.5 4.5H19.5V13M4.5 4.5V19.5H13" fill="none" stroke="#333" stroke-width="1.2" stroke-dasharray="4 2.2"/><g fill="#2f7fd0"><rect x="3" y="3" width="3" height="3"/><rect x="18" y="3" width="3" height="3"/><rect x="3" y="18" width="3" height="3"/></g><path d="M13.4 21.2L14.4 18L20 12.4L22.6 15L17 20.6Z" fill="#f0a93a"/><path d="M20 12.4L21.2 11.2Q22.6 10.6 23.6 11.8Q24.4 13 23.8 13.8L22.6 15Z" fill="#e8483a"/><path d="M13.4 21.2L14.4 18L16.6 20.2Z" fill="#444"/></g>
<g transform="translate(1483.4,981)"><path d="M2.5 6.2L5.5 3H17.5V15.6L14.5 19H2.5Z" fill="#58a4e4"/><path d="M2.5 6.2H14.5V19H2.5Z" fill="#4c9ce0"/><path d="M14.5 6.2L17.5 3V15.6L14.5 19Z" fill="#3a86cf"/><path d="M2.5 6.2L5.5 3H17.5L14.5 6.2Z" fill="#7fc0f2"/><path d="M2.5 19H14.5L17.5 15.6V18L14.5 21.4H2.5Z" fill="#c9cdd2"/><path d="M20.6 18V5" stroke="#222" stroke-width="1.3"/><path d="M18.4 6.6L20.6 2.8L22.8 6.6Z" fill="#222"/></g>
<g transform="translate(1513.4,981)"><path d="M2.5 6.2L5.5 3H17.5V15.6L14.5 19H2.5Z" fill="#58a4e4"/><path d="M2.5 6.2H14.5V19H2.5Z" fill="#4c9ce0"/><path d="M14.5 6.2L17.5 3V15.6L14.5 19Z" fill="#3a86cf"/><path d="M2.5 6.2L5.5 3H17.5L14.5 6.2Z" fill="#7fc0f2"/><path d="M2.5 19H14.5L17.5 15.6V18L14.5 21.4H2.5Z" fill="#c9cdd2"/><path d="M20.6 18V5" stroke="#222" stroke-width="1.3"/><path d="M18.4 6.6L20.6 2.8L22.8 6.6Z" fill="#222"/></g>
<g transform="translate(1543.4,981)"><path d="M10.6 4.5V19.3H3.8Z" fill="#fafafa" stroke="#d4d4d4" stroke-width="1.2" stroke-linejoin="round"/><path d="M13 3.6V20H21Z" fill="#d2e3f0"/></g>
<g transform="translate(1573.4,981)"><path d="M10.6 4.5V19.3H3.8Z" fill="#fafafa" stroke="#d4d4d4" stroke-width="1.2" stroke-linejoin="round"/><path d="M13 3.6V20H21Z" fill="#d2e3f0"/></g>
<path d="M1534.5 976.5H1549L1549 979.6L1543 987.4V1013.6H1540.4V987.4L1534.5 979.6Z" fill="#4a4a4a"/>
</svg>
</body></html>
